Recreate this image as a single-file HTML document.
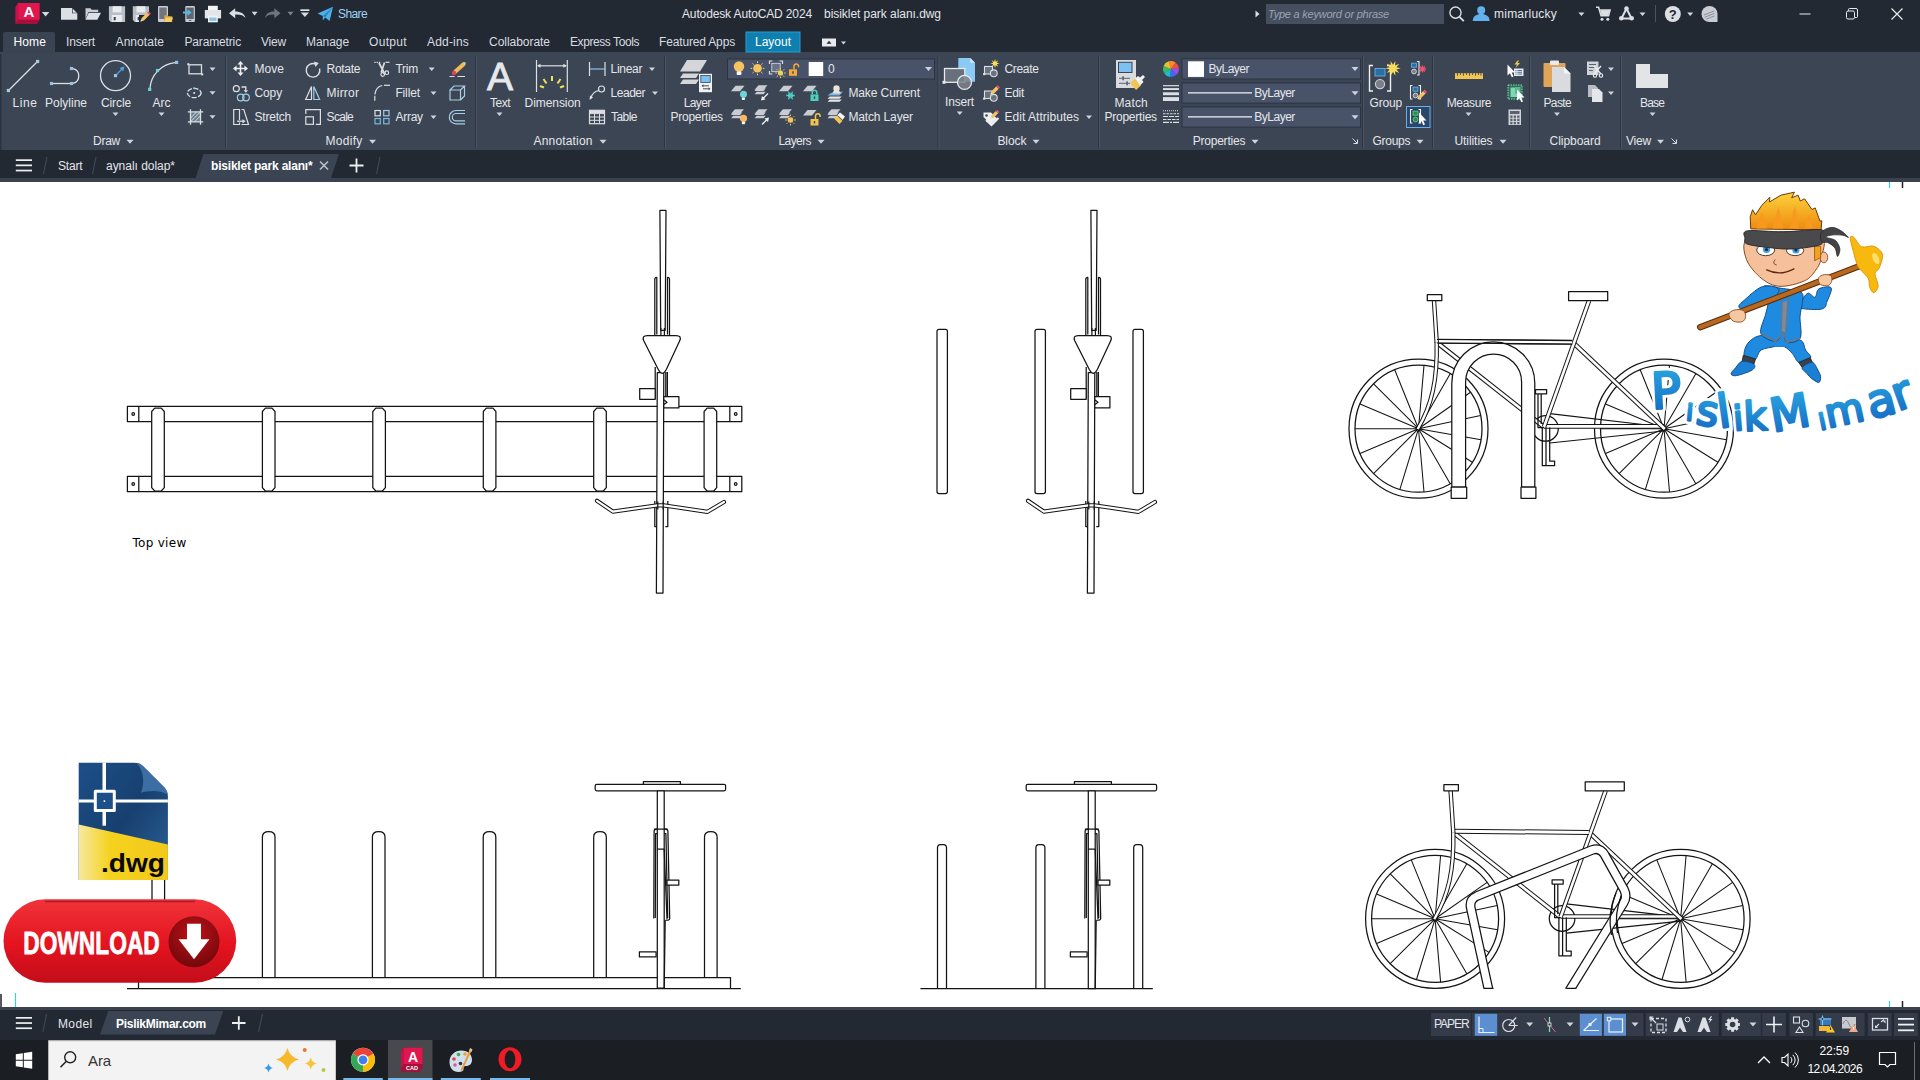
<!DOCTYPE html>
<html lang="tr"><head><meta charset="utf-8"><title>Autodesk AutoCAD 2024 - bisiklet park alanı.dwg</title>
<style>
html,body{margin:0;padding:0;width:1920px;height:1080px;overflow:hidden;background:#fff}
body{font-family:"Liberation Sans",sans-serif;font-size:12px;color:#e4e6ea;position:relative}
.r{position:absolute}
.t{position:absolute;white-space:nowrap;line-height:16px;height:16px;font-size:12px}
svg{position:absolute;left:0;top:0}
</style></head><body>

<div class="r" style="left:0;top:0;width:1920px;height:182px;background:#222933"></div>
<div class="r" style="left:0;top:52px;width:1920px;height:98px;background:#3c4553"></div>
<div class="r" style="left:0;top:178px;width:1920px;height:3.5px;background:#3a4250"></div>
<div class="r" style="left:0;top:1007px;width:1920px;height:33px;background:#222933"></div>
<div class="r" style="left:0;top:1007px;width:1920px;height:3px;background:#3a4250"></div>
<div class="r" style="left:0;top:1040px;width:1920px;height:40px;background:#1b1e23"></div>
<svg width="1920" height="1080" viewBox="0 0 1920 1080" style="font-family:'Liberation Sans',sans-serif">
<g id="titlebar">
<path d="M18 3h21.5v17l-2.5 4h-21.5v-17z" fill="#a50f3b"/>
<path d="M18.2 3h21.3v16.6h-21.3z" fill="#e2164f"/>
<path d="M15.5 7l2.7-4v16.6l-2.7 4z" fill="#c4134a"/>
<text x="28.8" y="16.6" font-size="15" font-weight="bold" fill="#fff" text-anchor="middle">A</text>
<path d="M41.9 11.9h7.5l-3.8 4.5z" fill="#d5d8de"/>
<path d="M61 8h11l5.3 5.2v6.6h-16.3z" fill="#dcdfe4"/><path d="M72 8v5.2h5.3z" fill="#222933"/><path d="M72.6 8.8l4 4h-4z" fill="#dcdfe4"/>
<path d="M85.5 8.2h5l1.2 1.6h6.5v2.2h-9.7l-3 7z" fill="#c9ccd2"/><path d="M88.7 12.8h12.3l-3.6 7h-12z" fill="#dcdfe4"/>
<path d="M108.9 6.2h16.2v15.7h-14.2l-2-2z" fill="#b9bdc6"/>
<rect x="112.6" y="6.2" width="8.8" height="6.2" fill="#e9ebee"/>
<rect x="111.8" y="15" width="10.4" height="6.9" fill="#e9ebee"/>
<rect x="113.7" y="17" width="2" height="3.3" fill="#3a4250"/>
<path d="M132.8 6.2h16.2v15.7h-14.2l-2-2z" fill="#b9bdc6"/>
<rect x="136.5" y="6.2" width="8.8" height="6.2" fill="#e9ebee"/>
<rect x="135.7" y="15" width="10.4" height="6.9" fill="#e9ebee"/>
<rect x="137.6" y="17" width="2" height="3.3" fill="#3a4250"/>
<rect x="139" y="15" width="11" height="8" fill="#222933"/>
<path d="M140.5 21.5l1.2-3.4 6.6-6.6 2.3 2.3-6.6 6.6z" fill="#f2c463"/><path d="M147 12.8l1.3-1.3 2.3 2.3-1.3 1.3z" fill="#e4526c"/><path d="M140.5 21.5l0.6-1.8 1.2 1.2z" fill="#eee"/>
<rect x="158" y="6" width="10" height="16" rx="1" fill="#c9ccd2"/><rect x="159.3" y="7.5" width="7.4" height="11.5" fill="#70757e"/>
<path d="M164.3 15.2h3.4l0.8 1h3.7v5.8h-7.9z" fill="#d9a441"/><path d="M165.6 17.6h7.4l-1.6 4.4h-7.1z" fill="#f6cd6a"/>
<rect x="185.3" y="6" width="9.6" height="16" rx="1" fill="#c9ccd2"/><rect x="186.5" y="7.6" width="7.2" height="11.4" fill="#5c6673"/><rect x="188.8" y="20" width="2.6" height="1" fill="#5c6673"/>
<path d="M183 11.4h4.6v-2.2l4 3.3-4 3.3v-2.2h-4.6z" fill="#5cb8e8"/>
<rect x="208" y="5.8" width="9.8" height="5" fill="#f2f3f5"/><path d="M204.8 10h16.3v8.4h-16.3z" fill="#e3e5e9"/><rect x="208" y="15.5" width="9.8" height="6.8" fill="#f2f3f5"/><rect x="209.3" y="17.5" width="7.2" height="3.4" fill="#8cc4ee"/>
<path d="M229 13.2l6.2-5v3.2c5.5 0 9.3 2 10.3 6.6-2-2.8-5.200-3.8-10.300-3.600v3.800z" fill="#dcdfe4"/>
<path d="M251.6 11.8h6.0l-3.0 3.6z" fill="#d5d8de"/>
<path d="M280.5 13.2l-6.200-5v3.2c-5.500 0-8.300 2-9.300 6.600 2-2.800 4.200-3.800 9.300-3.600v3.800z" fill="#6d7582"/>
<path d="M287.5 11.8h6.0l-3.0 3.6z" fill="#7b8390"/>
<rect x="300.4" y="9.300" width="9" height="1.700" fill="#dcdfe4"/>
<path d="M300.8 12.6h8.2l-4.1 4.4z" fill="#d5d8de"/>
<path d="M317.6 13.600l15.400-6.800-3.400 14.200-4.400-3.400-2.400 3v-4.600z" fill="#4fb0e8"/><path d="M322.800 16l10.200-9.200-7.800 10.800z" fill="#2c86c4"/>
<path d="M1255.500 10.500l4 3.500-4 3.500z" fill="#dcdfe4"/>
<rect x="1266" y="4" width="178" height="20" fill="#454f60"/>
<circle cx="1455.500" cy="12.600" r="5.600" fill="none" stroke="#dcdfe4" stroke-width="1.400"/><path d="M1459.500 16.800l4.300 4.400" stroke="#dcdfe4" stroke-width="1.800"/>
<circle cx="1481.200" cy="10.300" r="4" fill="#63b1ec"/><path d="M1472.800 21c0-5 3.800-7 8.400-7s8.400 2 8.400 7z" fill="#63b1ec"/>
<path d="M1578.4 12.4h6.0l-3.0 3.6z" fill="#d5d8de"/>
<path d="M1596 7.200h2.600l2.400 8.600h7.600l1.500-5.800h-10" fill="none" stroke="#dcdfe4" stroke-width="1.500"/><path d="M1600.200 10.200h9.400l-1.300 5h-6.800z" fill="#dcdfe4"/><circle cx="1602" cy="19.300" r="1.500" fill="#dcdfe4"/><circle cx="1607.800" cy="19.300" r="1.500" fill="#dcdfe4"/>
<path d="M1626.500 8.500l-5 10M1626.500 8.500l5 10M1621.500 18.500l10 0" stroke="#dcdfe4" stroke-width="2" fill="none"/><circle cx="1626.500" cy="8.600" r="2.300" fill="#dcdfe4"/><circle cx="1621.300" cy="18.300" r="2.300" fill="#dcdfe4"/><circle cx="1631.700" cy="18.300" r="2.300" fill="#dcdfe4"/>
<path d="M1639.5 12.4h6.0l-3.0 3.6z" fill="#d5d8de"/>
<rect x="1655" y="5" width="1" height="17" fill="#4a5363"/>
<circle cx="1672.800" cy="14" r="8" fill="#dcdfe4"/><text x="1672.800" y="18.600" font-size="13" font-weight="bold" fill="#222933" text-anchor="middle">?</text>
<path d="M1687.2 12.4h6.0l-3.0 3.6z" fill="#d5d8de"/>
<path d="M1701.500 14a8 8 0 1 1 16 0v8h-8a8 8 0 0 1-8-8z" fill="#c9ccd2"/><path d="M1704 15l10-4M1704.500 17.300l10-4M1706 19.300l8.500-3.400" stroke="#8a909b" stroke-width="1"/>
<rect x="1799.500" y="13.500" width="11" height="1" fill="#e8eaee"/>
<rect x="1846.500" y="11" width="8" height="8" rx="1.500" fill="none" stroke="#e8eaee" stroke-width="1"/><path d="M1848.500 11v-1.500a1 1 0 0 1 1-1h6.500a1.500 1.500 0 0 1 1.500 1.500v6.500a1 1 0 0 1-1 1h-1.500" fill="none" stroke="#e8eaee" stroke-width="1"/>
<path d="M1891.500 8.500l11 11M1902.500 8.500l-11 11" stroke="#e8eaee" stroke-width="1.200"/>
</g>
<g id="tabs">
<path d="M3 54v-20a2 2 0 0 1 2-2h48a2 2 0 0 1 2 2v20z" fill="#3a4351"/>
<rect x="746" y="32" width="54" height="20" fill="#0f7fb0" stroke="#2b9ed2" stroke-width="1"/>
<rect x="822" y="38.500" width="14" height="8" fill="#e8eaee"/>
<path d="M826.5 43.8h5.0l-2.5 -3.0z" fill="#222933"/>
<path d="M841.0 41.5h5.0l-2.5 3.0z" fill="#d5d8de"/>
</g><g id="ribbon">
<rect x="225.0" y="56" width="1" height="92" fill="#2e3644"/><rect x="226.0" y="56" width="1" height="92" fill="#485264"/>
<rect x="475.0" y="56" width="1" height="92" fill="#2e3644"/><rect x="476.0" y="56" width="1" height="92" fill="#485264"/>
<rect x="664.0" y="56" width="1" height="92" fill="#2e3644"/><rect x="665.0" y="56" width="1" height="92" fill="#485264"/>
<rect x="937.5" y="56" width="1" height="92" fill="#2e3644"/><rect x="938.5" y="56" width="1" height="92" fill="#485264"/>
<rect x="1098.0" y="56" width="1" height="92" fill="#2e3644"/><rect x="1099.0" y="56" width="1" height="92" fill="#485264"/>
<rect x="1362.0" y="56" width="1" height="92" fill="#2e3644"/><rect x="1363.0" y="56" width="1" height="92" fill="#485264"/>
<rect x="1432.0" y="56" width="1" height="92" fill="#2e3644"/><rect x="1433.0" y="56" width="1" height="92" fill="#485264"/>
<rect x="1529.0" y="56" width="1" height="92" fill="#2e3644"/><rect x="1530.0" y="56" width="1" height="92" fill="#485264"/>
<rect x="1620.0" y="56" width="1" height="92" fill="#2e3644"/><rect x="1621.0" y="56" width="1" height="92" fill="#485264"/>
<rect x="0" y="54" width="1.500" height="96" fill="#2b3240"/>
<path d="M9.5 89.5L36.5 62.5" fill="none" stroke="#dcdfe4" stroke-width="1.3" />
<rect x="6.8" y="88.9" width="3.2" height="3.2" fill="#a8cbe4"/>
<rect x="36.0" y="59.9" width="3.2" height="3.2" fill="#a8cbe4"/>
<path d="M53 83.500H70" fill="none" stroke="#dcdfe4" stroke-width="1.3" />
<path d="M73 68.700A7.500 7.500 0 0 1 73 83.300" fill="none" stroke="#dcdfe4" stroke-width="1.3" />
<rect x="49.9" y="81.9" width="3.2" height="3.2" fill="#8ec5ea"/>
<rect x="69.9" y="81.9" width="3.2" height="3.2" fill="#8ec5ea"/>
<rect x="69.9" y="66.9" width="3.2" height="3.2" fill="#8ec5ea"/>
<circle cx="115.500" cy="75.600" r="15" fill="none" stroke="#dcdfe4" stroke-width="1.300"/>
<path d="M116.500 74.500L123 68" fill="none" stroke="#4aa3e0" stroke-width="1.3" />
<path d="M124.500 66.500l-5 1.300 3.700 3.700z" fill="#4aa3e0"/>
<rect x="113.9" y="74.0" width="3.2" height="3.2" fill="#8ec5ea"/>
<path d="M150 88C151 75 161 64.500 175 62.700" fill="none" stroke="#dcdfe4" stroke-width="1.3" />
<rect x="148.1" y="87.8" width="3.2" height="3.2" fill="#6fcfd6"/>
<rect x="155.9" y="68.9" width="3.2" height="3.2" fill="#6fcfd6"/>
<rect x="175.0" y="60.8" width="3.2" height="3.2" fill="#8ec5ea"/>
<path d="M112.5 112.5h6.0l-3.0 3.5z" fill="#cfd3da"/>
<path d="M158.5 112.5h6.0l-3.0 3.5z" fill="#cfd3da"/>
<rect x="189" y="64.800" width="12.500" height="9" fill="none" stroke="#dcdfe4" stroke-width="1.300"/>
<rect x="187.3" y="63.2" width="2.0" height="2.0" fill="#dcdfe4"/>
<rect x="201.2" y="73.4" width="2.0" height="2.0" fill="#dcdfe4"/>
<ellipse cx="194.200" cy="93" rx="6.800" ry="4.600" fill="none" stroke="#dcdfe4" stroke-width="1.300" stroke-dasharray="5 1.500"/>
<rect x="193.3" y="92.1" width="1.8" height="1.8" fill="#dcdfe4"/>
<rect x="200.1" y="92.1" width="1.8" height="1.8" fill="#8ec5ea"/>
<rect x="193.3" y="87.4" width="1.8" height="1.8" fill="#8ec5ea"/>
<rect x="190.500" y="111.800" width="10" height="10" fill="#6f7f8c"/>
<path d="M190.500 118l6-6M190.500 121.800l10-10M194.500 121.800l6-6" fill="none" stroke="#d5eef0" stroke-width="0.9" />
<path d="M190.500 109.300v15.400M200.500 109.300v15.400M187.800 111.800h15.400M187.800 121.800h15.400" fill="none" stroke="#dcdfe4" stroke-width="1.3" />
<path d="M209.5 67.5h6.0l-3.0 3.5z" fill="#cfd3da"/>
<path d="M209.5 91.2h6.0l-3.0 3.5z" fill="#cfd3da"/>
<path d="M209.5 115.2h6.0l-3.0 3.5z" fill="#cfd3da"/>
<path d="M126.5 139.8h7.0l-3.5 4.0z" fill="#cfd3da"/>
<path d="M240.500 61l3 3.600h-2.200v3.100h3.100v-2.200l3.600 3-3.600 3v-2.200h-3.100v3.100h2.200l-3 3.600-3-3.600h2.200v-3.100h-3.100v2.200l-3.600-3 3.600-3v2.200h3.100v-3.100h-2.200z" fill="#eceef1"/>
<circle cx="236.300" cy="88.700" r="3" fill="none" stroke="#dcdfe4" stroke-width="1.200"/>
<path d="M241.500 87h4.300v3.500" fill="none" stroke="#dcdfe4" stroke-width="1.3" />
<path d="M243.500 90.200h4.600l-2.300 2.600z" fill="#dcdfe4"/>
<circle cx="240.700" cy="97.500" r="3.300" fill="none" stroke="#9fd0e4" stroke-width="1.200"/><circle cx="246" cy="97.500" r="3.300" fill="none" stroke="#9fd0e4" stroke-width="1.200"/>
<path d="M239.500 120v-10.500h-5.800v15h5.800v-2" fill="none" stroke="#dcdfe4" stroke-width="1.2" />
<path d="M241.500 109.500h2.300l4.700 15h-7" fill="none" stroke="#dcdfe4" stroke-width="1.2" />
<path d="M237 121.200h6" fill="none" stroke="#dcdfe4" stroke-width="1.3" />
<path d="M242.500 119l3 2.200-3 2.200z" fill="#dcdfe4"/>
<path d="M316 64.200A6.800 6.800 0 1 0 319.600 68.500" fill="none" stroke="#dcdfe4" stroke-width="1.4" />
<path d="M314 61.500l4.800 1.600-3.400 3.800z" fill="#dcdfe4"/>
<path d="M311.500 86.500v13h-5.800z" fill="none" stroke="#dcdfe4" stroke-width="1.2" />
<path d="M313.800 86.500v13h5.800z" fill="none" stroke="#9fd0e4" stroke-width="1.2" />
<path d="M305.800 114v-4.300h14.600v14.600h-4.600" fill="none" stroke="#dcdfe4" stroke-width="1.2" />
<rect x="305.800" y="116.800" width="7.600" height="7.500" fill="none" stroke="#dcdfe4" stroke-width="1.200"/>
<path d="M374.300 62.300h7" fill="none" stroke="#dcdfe4" stroke-width="1.2" stroke-dasharray="1.300 1"/>
<path d="M385.500 62.300h4" fill="none" stroke="#dcdfe4" stroke-width="1.2" />
<path d="M379 63l5.500 10.500M384.500 62.500l-3.300 10" fill="none" stroke="#dcdfe4" stroke-width="1.7" />
<circle cx="382.700" cy="74.500" r="1.800" fill="none" stroke="#dcdfe4" stroke-width="1.200"/><circle cx="386.800" cy="72.700" r="1.800" fill="none" stroke="#dcdfe4" stroke-width="1.200"/>
<path d="M374.800 100.800v-5" fill="none" stroke="#dcdfe4" stroke-width="1.2" />
<path d="M374.900 94.500C375.500 89.500 378.500 86.200 382.300 85.500" fill="none" stroke="#dcdfe4" stroke-width="1.2" />
<path d="M384 85.300h6" fill="none" stroke="#dcdfe4" stroke-width="1.2" />
<rect x="375.0" y="110.5" width="5.300" height="5.300" fill="none" stroke="#dcdfe4" stroke-width="1.200"/>
<rect x="383.7" y="110.5" width="5.300" height="5.300" fill="none" stroke="#9fcbe8" stroke-width="1.200"/>
<rect x="375.0" y="118.5" width="5.300" height="5.300" fill="none" stroke="#7ab8e0" stroke-width="1.200"/>
<rect x="383.7" y="118.5" width="5.300" height="5.300" fill="none" stroke="#7ab8e0" stroke-width="1.200"/>
<path d="M428.7 67.5h6.0l-3.0 3.5z" fill="#cfd3da"/>
<path d="M430.5 91.5h6.0l-3.0 3.5z" fill="#cfd3da"/>
<path d="M430.5 115.5h6.0l-3.0 3.5z" fill="#cfd3da"/>
<path d="M453.500 70.500l9-8 3 0.300-0.600 3-9 8z" fill="#f0b95a"/><path d="M462.500 62.500l3-0.300-0.300 3.300z" fill="#c8e0a0"/><circle cx="454" cy="73" r="2.200" fill="#e8414e"/>
<path d="M449.500 76.500h5M457.500 76.500h7.500" fill="none" stroke="#dcdfe4" stroke-width="1.1" />
<path d="M450 90h10.500v10h-10.500zM450 90l4-4h10.500l-4 4M464.500 86v10l-4 4" fill="none" stroke="#a9cfe6" stroke-width="1.2" />
<path d="M465 110.500h-9a6.700 6.700 0 0 0 0 13.400h9M465 113.500h-9a3.700 3.700 0 0 0 0 7.400h9" fill="none" stroke="#a9cfe6" stroke-width="1.2" />
<path d="M369.0 139.8h7.0l-3.5 4.0z" fill="#cfd3da"/>
<text x="500" y="90" font-size="39" fill="#e6e8ec" stroke="#e6e8ec" stroke-width="0.900" text-anchor="middle" style="font-family:'Liberation Sans',sans-serif">A</text>
<path d="M496.5 112.5h6.0l-3.0 3.5z" fill="#cfd3da"/>
<path d="M536.500 60v32M567.300 60v32" fill="none" stroke="#dcdfe4" stroke-width="1.2" />
<path d="M538 65.800h28" fill="none" stroke="#dcdfe4" stroke-width="1.2" />
<path d="M537 65.800l3.500-2v4zM566.800 65.800l-3.500-2v4z" fill="#dcdfe4"/>
<path d="M552.0 76.0L552.0 81.0" fill="none" stroke="#f0e060" stroke-width="2" />
<path d="M543.5 79.0L546.5 83.5" fill="none" stroke="#f0e060" stroke-width="2" />
<path d="M560.5 79.0L557.5 83.5" fill="none" stroke="#f0e060" stroke-width="2" />
<path d="M540.0 86.0L544.0 87.5" fill="none" stroke="#f0e060" stroke-width="2" />
<path d="M564.0 86.0L560.0 87.5" fill="none" stroke="#f0e060" stroke-width="2" />
<path d="M589.500 62v14M605 62v14" fill="none" stroke="#dcdfe4" stroke-width="1.2" />
<path d="M590 69h15" fill="none" stroke="#8ec5ea" stroke-width="1.2" />
<circle cx="601.500" cy="89" r="3" fill="none" stroke="#dcdfe4" stroke-width="1.200"/>
<path d="M599 90.500C594 91 592 94 590.500 98.500" fill="none" stroke="#dcdfe4" stroke-width="1.2" />
<path d="M589.500 100l0.500-4.500 3 2z" fill="#dcdfe4"/>
<rect x="589.500" y="110.300" width="15" height="13.400" fill="none" stroke="#dcdfe4" stroke-width="1.200"/>
<path d="M589.500 113.600h15M589.500 117h15M589.500 120.300h15M594.500 113.600v10M599.500 113.600v10" fill="none" stroke="#dcdfe4" stroke-width="1" />
<rect x="589.500" y="110.300" width="15" height="3" fill="#dcdfe4"/>
<path d="M649.0 67.5h6.0l-3.0 3.5z" fill="#cfd3da"/>
<path d="M652.0 91.5h6.0l-3.0 3.5z" fill="#cfd3da"/>
<path d="M599.5 139.8h7.0l-3.5 4.0z" fill="#cfd3da"/>
</g><g id="ribbon2">
<path d="M687.0 60.0h20.0l-7.0 11.5h-20.0z" fill="#d4d6da"/>
<path d="M683.0 73.5h16.0l-3.0 4.5h-16.0z" fill="#d4d6da"/>
<path d="M683.0 79.5h16.0l-3.0 4.5h-16.0z" fill="#d4d6da"/>
<rect x="699" y="73.800" width="13" height="18.400" fill="#f1f2f4"/><rect x="700.800" y="75.500" width="9.400" height="7" fill="#7cc0f4" stroke="#3b4453" stroke-width="0.800"/>
<path d="M702 85.800h7M703 88.800h7" fill="none" stroke="#4a5260" stroke-width="1" />
<path d="M701.500 85.800l2-1.500v3zM710.500 88.800l-2-1.500v3z" fill="#4a5260"/>
<rect x="727.500" y="59" width="207" height="20" fill="#48536a" stroke="#2c3442" stroke-width="1"/>
<circle cx="739.0" cy="66.5" r="5.2" fill="#f7c35f"/><rect x="736.7" y="71.2" width="4.7" height="3.9" rx="0.800" fill="#f4f4f4"/>
<circle cx="757.5" cy="68.3" r="4.3" fill="#f7c35f"/>
<path d="M762.8 68.3L764.4 68.3M761.2 72.0L762.4 73.2M757.5 73.6L757.5 75.2M753.8 72.0L752.6 73.2M752.2 68.3L750.6 68.3M753.8 64.6L752.6 63.4M757.5 63.0L757.5 61.4M761.2 64.6L762.4 63.4" fill="none" stroke="#f7d98a" stroke-width="1" />
<path d="M769.500 64v-3h3M779.500 61h3v3M769.500 71v3h3" fill="none" stroke="#dcdfe4" stroke-width="1.2" />
<rect x="771.800" y="63.300" width="8.400" height="8.400" fill="#6a7385" stroke="#dcdfe4" stroke-width="0.800"/>
<circle cx="780.5" cy="73.0" r="2.6" fill="#f0d060"/>
<path d="M784.1 73.0L785.7 73.0M783.0 75.5L784.2 76.7M780.5 76.6L780.5 78.2M778.0 75.5L776.8 76.7M776.9 73.0L775.3 73.0M778.0 70.5L776.8 69.3M780.5 69.4L780.5 67.8M783.0 70.5L784.2 69.3" fill="none" stroke="#f0d060" stroke-width="1" />
<rect x="789.0" y="69.3" width="8" height="6.500" fill="#f5a93a"/>
<path d="M794.0 69.3v-3a2.300 2.300 0 0 1 4.600 0v1" fill="none" stroke="#f5a93a" stroke-width="1.5" />
<rect x="792.3" y="71.3" width="1.400" height="2.400" fill="#3b4453"/>
<rect x="808.700" y="62" width="14.500" height="14" fill="#fff"/>
<path d="M925.0 67.0h7.0l-3.5 4.0z" fill="#cfd3da"/>
<path d="M735.5 85.8h9.0l-4.5 5.5h-9.0z" fill="#c9ccd3"/>
<circle cx="743.5" cy="94.3" r="3.5" fill="#6fd4d8"/><rect x="741.9" y="97.5" width="3.1" height="2.6" rx="0.800" fill="#f4f4f4"/>
<path d="M758.5 85.3h9.0l-4.0 4.5h-9.0z" fill="#c9ccd3"/>
<path d="M756.8 88.5h9.0l-2.3 2.6h-9.0z" fill="#c9ccd3"/>
<path d="M756.8 91.7h9.0l-2.3 2.6h-9.0z" fill="#c9ccd3"/>
<path d="M768 93.500l-5.500 5.500" fill="none" stroke="#eef0f2" stroke-width="1.3" />
<path d="M761 100.500l1-4.500 3.500 3.500z" fill="#eef0f2"/>
<path d="M783.5 85.8h9.0l-4.5 5.5h-9.0z" fill="#c9ccd3"/>
<path d="M794.8 95.5L786.2 95.5M792.6 99.2L788.4 91.8M788.4 99.2L792.6 91.8" fill="none" stroke="#4fcfc8" stroke-width="1.3" />
<circle cx="790.500" cy="95.500" r="2.300" fill="none" stroke="#4fcfc8" stroke-width="1"/>
<path d="M807.5 85.8h9.0l-4.5 5.5h-9.0z" fill="#c9ccd3"/>
<rect x="810.5" y="94.5" width="8" height="6.500" fill="#4fcfb8"/>
<path d="M812.2 94.5v-2a2.300 2.300 0 0 1 4.600 0v2" fill="none" stroke="#4fcfb8" stroke-width="1.5" />
<rect x="813.8" y="96.5" width="1.400" height="2.400" fill="#3b4453"/>
<path d="M831 93l12-1.500-3.500 4h-12z" fill="#7ab6e6"/>
<path d="M829.8 96.5h12.0l-2.3 2.3h-12.0z" fill="#e4e6ea"/>
<path d="M829.8 99.5h12.0l-2.3 2.3h-12.0z" fill="#e4e6ea"/>
<circle cx="836.500" cy="88.500" r="3.200" fill="#e8e4dc"/><path d="M832.500 93.500a4 3 0 0 1 8 0z" fill="#e8e4dc"/>
<path d="M735.0 109.3h9.0l-4.0 4.5h-9.0z" fill="#c9ccd3"/>
<path d="M733.3 112.5h9.0l-2.3 2.6h-9.0z" fill="#c9ccd3"/>
<path d="M733.3 115.7h9.0l-2.3 2.6h-9.0z" fill="#c9ccd3"/>
<circle cx="743.5" cy="118.3" r="3.6" fill="#f7b860"/><rect x="741.9" y="121.5" width="3.2" height="2.7" rx="0.800" fill="#f4f4f4"/>
<path d="M758.5 109.3h9.0l-4.0 4.5h-9.0z" fill="#c9ccd3"/>
<path d="M756.8 112.5h9.0l-2.3 2.6h-9.0z" fill="#c9ccd3"/>
<path d="M756.8 115.7h9.0l-2.3 2.6h-9.0z" fill="#c9ccd3"/>
<path d="M762 124.500l5.500-5.500" fill="none" stroke="#eef0f2" stroke-width="1.3" />
<path d="M769 117.500l-1 4.500-3.500-3.500z" fill="#eef0f2"/>
<path d="M783.0 109.3h9.0l-4.0 4.5h-9.0z" fill="#c9ccd3"/>
<path d="M781.3 112.5h9.0l-2.3 2.6h-9.0z" fill="#c9ccd3"/>
<path d="M781.3 115.7h9.0l-2.3 2.6h-9.0z" fill="#c9ccd3"/>
<circle cx="790.5" cy="120.0" r="2.8" fill="#f7c35f"/>
<path d="M794.3 120.0L795.9 120.0M793.2 122.7L794.3 123.8M790.5 123.8L790.5 125.4M787.8 122.7L786.7 123.8M786.7 120.0L785.1 120.0M787.8 117.3L786.7 116.2M790.5 116.2L790.5 114.6M793.2 117.3L794.3 116.2" fill="none" stroke="#f7c35f" stroke-width="1" />
<path d="M807.5 110.0h9.0l-4.5 5.5h-9.0z" fill="#c9ccd3"/>
<rect x="810.5" y="119.0" width="8" height="6.500" fill="#f2c14e"/>
<path d="M815.5 119.0v-3a2.300 2.300 0 0 1 4.600 0v1" fill="none" stroke="#f2c14e" stroke-width="1.5" />
<rect x="813.8" y="121.0" width="1.400" height="2.400" fill="#3b4453"/>
<path d="M831.5 109.3h9.0l-4.0 4.5h-9.0z" fill="#c9ccd3"/>
<path d="M829.8 112.5h9.0l-2.3 2.6h-9.0z" fill="#c9ccd3"/>
<path d="M829.8 115.7h9.0l-2.3 2.6h-9.0z" fill="#c9ccd3"/>
<path d="M834 118.500l3-3 5.500 5.500-3 3z" fill="#f2c452"/><path d="M837.500 115l2.500-2.500 5 4-2.500 3.500z" fill="#f4f4f4"/>
<path d="M817.5 139.8h7.0l-3.5 4.0z" fill="#cfd3da"/>
<path d="M958.300 58h12l4.700 4.700v19h-16.700z" fill="#8ccaf6"/><path d="M970.300 58v4.700h4.700z" fill="#cfe9fb"/>
<rect x="944.500" y="68.500" width="20.300" height="13.800" fill="#67707b" stroke="#e8eaee" stroke-width="1.300"/><rect x="942.500" y="80.800" width="3" height="3" fill="#e8eaee"/>
<circle cx="964.500" cy="82.400" r="7" fill="#7d828c" fill-opacity="0.850" stroke="#e8eaee" stroke-width="1.300"/>
<path d="M956.7 111.5h6.0l-3.0 3.5z" fill="#cfd3da"/>
<rect x="984.5" y="66.5" width="8" height="7.500" fill="#69727d" stroke="#dcdfe4" stroke-width="1.100"/><rect x="983.1" y="73.0" width="2.200" height="2.200" fill="#dcdfe4"/><circle cx="993.8" cy="73.3" r="3.400" fill="#69727d" stroke="#dcdfe4" stroke-width="1.100"/>
<path d="M999.6 63.5 996.8 64.3 998.3 66.8 995.8 65.3 995.0 68.1 994.2 65.3 991.7 66.8 993.2 64.3 990.4 63.5 993.2 62.7 991.7 60.2 994.2 61.7 995.0 58.9 995.8 61.7 998.3 60.2 996.8 62.7 z" fill="#f7dc5a"/>
<rect x="984.5" y="91.0" width="8" height="7.500" fill="#69727d" stroke="#dcdfe4" stroke-width="1.100"/><rect x="983.1" y="97.5" width="2.200" height="2.200" fill="#dcdfe4"/><circle cx="993.8" cy="97.8" r="3.400" fill="#69727d" stroke="#dcdfe4" stroke-width="1.100"/>
<g transform="translate(990.5 87.0) scale(0.95)"><path d="M0 8l1-3.500 5-5 2.500 2.500-5 5z" fill="#f2c463"/><path d="M6 -0.500l1.500-1.500 2.500 2.500-1.500 1.500z" fill="#e8506c"/><path d="M0 8l0.600-2 1.400 1.400z" fill="#eee"/></g>
<path d="M983.500 112.500h7.500l6 6-6 6-7.500-7.500z" fill="#eef0f2"/><circle cx="986.500" cy="115.500" r="1.300" fill="#3b4453"/><path d="M986 120l5.500 5 7-7" stroke="#eef0f2" stroke-width="2" fill="none"/>
<g transform="translate(990.5 111.5) scale(0.90)"><path d="M0 8l1-3.500 5-5 2.500 2.500-5 5z" fill="#f2c463"/><path d="M6 -0.500l1.500-1.500 2.500 2.500-1.500 1.500z" fill="#e8506c"/><path d="M0 8l0.600-2 1.400 1.400z" fill="#eee"/></g>
<path d="M1086.0 115.5h6.0l-3.0 3.5z" fill="#cfd3da"/>
<path d="M1032.5 139.8h7.0l-3.5 4.0z" fill="#cfd3da"/>
<rect x="1116" y="60" width="20" height="28" fill="#d9dbde"/><rect x="1118.500" y="62.300" width="13.500" height="10.200" fill="#7cc0f4" stroke="#3b4453" stroke-width="1"/>
<path d="M1119 78.300h11M1119 83.300h11" fill="none" stroke="#5a6270" stroke-width="1" />
<rect x="1122.300" y="76.300" width="1.600" height="4" fill="#5a6270"/><rect x="1126.300" y="81.300" width="1.600" height="4" fill="#5a6270"/>
<path d="M1130 83l5-4.500 6 7-5 4.500z" fill="#f2c452"/><path d="M1135 78.500l3-2.500 2 1.500 3-2.500 2 2-3 3 1.500 2-3.500 3.500z" fill="#f1f2f4"/>
<path d="M1171 69L1168.64 61.36A8 8 0 0 1 1175.50 62.39z" fill="#ff8a2a"/>
<path d="M1171 69L1175.50 62.39A8 8 0 0 1 1178.98 68.40z" fill="#f0503c"/>
<path d="M1171 69L1178.98 68.40A8 8 0 0 1 1176.45 74.86z" fill="#9a4cf0"/>
<path d="M1171 69L1176.45 74.86A8 8 0 0 1 1169.81 76.91z" fill="#3c6cf0"/>
<path d="M1171 69L1169.81 76.91A8 8 0 0 1 1164.08 73.01z" fill="#22b8c8"/>
<path d="M1171 69L1164.08 73.01A8 8 0 0 1 1163.55 66.08z" fill="#38c060"/>
<path d="M1171 69L1163.55 66.08A8 8 0 0 1 1168.64 61.36z" fill="#e8c030"/>
<rect x="1163" y="85.1" width="16" height="1.2" fill="#dcdfe4"/>
<rect x="1163" y="88.1" width="16" height="1.9" fill="#dcdfe4"/>
<rect x="1163" y="92.3" width="16" height="2.9" fill="#dcdfe4"/>
<rect x="1163" y="97.1" width="16" height="3.9" fill="#dcdfe4"/>
<path d="M1163 110.8h16" fill="none" stroke="#dcdfe4" stroke-width="1.1" stroke-dasharray="1 1"/>
<path d="M1163 113.7h16" fill="none" stroke="#dcdfe4" stroke-width="1.1" stroke-dasharray="2.500 1"/>
<path d="M1163 116.5h16" fill="none" stroke="#dcdfe4" stroke-width="1.1" stroke-dasharray="5 1"/>
<path d="M1163 119.5h16" fill="none" stroke="#dcdfe4" stroke-width="1.1" stroke-dasharray="3.500 1"/>
<path d="M1163 122.4h16" fill="none" stroke="#dcdfe4" stroke-width="1.1" stroke-dasharray="6 1 2 1"/>
<rect x="1182" y="58.8" width="178.500" height="20.200" fill="#48536a" stroke="#2c3442" stroke-width="1"/>
<path d="M1351.5 67.1h7.0l-3.5 4.0z" fill="#cfd3da"/>
<rect x="1182" y="82.9" width="178.500" height="20.200" fill="#48536a" stroke="#2c3442" stroke-width="1"/>
<path d="M1351.5 91.2h7.0l-3.5 4.0z" fill="#cfd3da"/>
<rect x="1182" y="106.9" width="178.500" height="20.200" fill="#48536a" stroke="#2c3442" stroke-width="1"/>
<path d="M1351.5 115.2h7.0l-3.5 4.0z" fill="#cfd3da"/>
<rect x="1188" y="61.300" width="16" height="15.600" fill="#fff"/>
<path d="M1188 92.800h64M1188 116.800h64" fill="none" stroke="#f0f2f4" stroke-width="1.2" />
<path d="M1251.5 139.8h7.0l-3.5 4.0z" fill="#cfd3da"/>
<path d="M1352.500 138.500l4.500 4.500M1357.500 139.500v4h-4" fill="none" stroke="#dcdfe4" stroke-width="1" />
<path d="M1373 65.500h-3.500v25.500h3.500M1387 65.500h3.500v25.500h-3.500" fill="none" stroke="#eef0f2" stroke-width="1.4" />
<rect x="1375" y="68.500" width="10" height="7.500" fill="#2e6da0" stroke="#5aa9e0" stroke-width="1"/><circle cx="1380" cy="84.100" r="4.600" fill="#7a7f88" stroke="#d0d3d8" stroke-width="1.100"/>
<path d="M1400.8 68.3 1396.4 69.4 1399.3 72.9 1395.1 71.2 1395.4 75.7 1393.0 71.9 1390.6 75.7 1390.9 71.2 1386.7 72.9 1389.6 69.4 1385.2 68.3 1389.6 67.2 1386.7 63.7 1390.9 65.4 1390.6 60.9 1393.0 64.7 1395.4 60.9 1395.1 65.4 1399.3 63.7 1396.4 67.2 z" fill="#f7dc5a"/>
<path d="M1417.0 61.5h2v13.500h-2" fill="none" stroke="#eef0f2" stroke-width="1.1" />
<rect x="1411.6" y="63.2" width="4.800" height="4" fill="#2e6da0" stroke="#5aa9e0" stroke-width="1"/><circle cx="1414.0" cy="71.5" r="2.400" fill="#7a7f88" stroke="#d0d3d8" stroke-width="1"/>
<path d="M1420 66.500l5 5M1425 66.500l-5 5M1422.500 65.500v7M1419 69h7" fill="none" stroke="#f0506a" stroke-width="1.3" />
<path d="M1412.5 85.5h-2v13.500h2" fill="none" stroke="#eef0f2" stroke-width="1.1" />
<path d="M1418.5 85.5h2v13.500h-2" fill="none" stroke="#eef0f2" stroke-width="1.1" />
<rect x="1413.1" y="87.2" width="4.800" height="4" fill="#2e6da0" stroke="#5aa9e0" stroke-width="1"/><circle cx="1415.5" cy="95.5" r="2.400" fill="#7a7f88" stroke="#d0d3d8" stroke-width="1"/>
<g transform="translate(1417.5 91.5) scale(0.95)"><path d="M0 8l1-3.500 5-5 2.500 2.500-5 5z" fill="#f2c463"/><path d="M6 -0.500l1.500-1.500 2.500 2.500-1.500 1.500z" fill="#e8506c"/><path d="M0 8l0.600-2 1.400 1.400z" fill="#eee"/></g>
<rect x="1406.500" y="106.500" width="23.500" height="21" fill="#2b4668" stroke="#6ab0e8" stroke-width="1"/>
<path d="M1412.5 109.5h-2v13.500h2" fill="none" stroke="#eef0f2" stroke-width="1.1" />
<path d="M1418.5 109.5h2v13.500h-2" fill="none" stroke="#eef0f2" stroke-width="1.1" />
<rect x="1413.1" y="111.2" width="4.800" height="4" fill="#2e8a50" stroke="#58c878" stroke-width="1"/><circle cx="1415.5" cy="119.5" r="2.400" fill="#2e8a50" stroke="#58c878" stroke-width="1"/>
<path d="M1419 112.500v11l2.500-2.300 1.800 4 1.700-0.800-1.800-3.800h3.300z" fill="#fff"/>
<path d="M1416.5 139.8h7.0l-3.5 4.0z" fill="#cfd3da"/>
<rect x="1455" y="73.200" width="28" height="5.800" fill="#f2c452"/>
<path d="M1457.500 73.200v2.500M1460.500 73.200v1.800M1463.500 73.200v2.500M1466.500 73.200v1.800M1469.500 73.200v2.500M1472.500 73.200v1.800M1475.500 73.200v2.500M1478.500 73.200v1.800M1481 73.200v2.500" fill="none" stroke="#3b4453" stroke-width="0.9" />
<path d="M1465.5 112.5h6.0l-3.0 3.5z" fill="#cfd3da"/>
<path d="M1507.500 64.500v11l2.500-2.300 1.800 4 1.700-0.800-1.800-3.800h3.300z" fill="#fff"/><rect x="1514" y="68.500" width="9.500" height="7.500" fill="#e8eaee"/><path d="M1517.500 60.500l-3 4h2.500l-1.500 3.500 4.500-5h-2.500l1.500-2.500z" fill="#f7c84a"/>
<path d="M1515.500 70.500h1M1517.500 70.500h4.500M1515.500 72.300h1M1517.500 72.300h4.500M1515.500 74.100h1M1517.500 74.100h4.500" fill="none" stroke="#3b6a90" stroke-width="0.9" />
<rect x="1508" y="85" width="14" height="14" fill="#2f6e58" stroke="#7fe0b0" stroke-width="1" stroke-dasharray="1.500 1"/><path d="M1510.500 87.500h5v6.500h5.500v3h-10.500z" fill="#7fd8b0"/><rect x="1515" y="87" width="5.500" height="7" fill="#58b890"/><path d="M1517 89.500v11l2.500-2.300 1.800 4 1.700-0.800-1.800-3.800h3.300z" fill="#fff"/>
<rect x="1508.500" y="109.500" width="12.500" height="15.500" fill="#d0d3d8"/><rect x="1510" y="111" width="9.500" height="3" fill="#5a6270"/>
<rect x="1510.2" y="115.5" width="2.300" height="2.300" fill="#5a6270"/>
<rect x="1513.7" y="115.5" width="2.300" height="2.300" fill="#5a6270"/>
<rect x="1517.2" y="115.5" width="2.300" height="2.300" fill="#5a6270"/>
<rect x="1510.2" y="118.7" width="2.300" height="2.300" fill="#5a6270"/>
<rect x="1513.7" y="118.7" width="2.300" height="2.300" fill="#5a6270"/>
<rect x="1517.2" y="118.7" width="2.300" height="2.300" fill="#5a6270"/>
<rect x="1510.2" y="121.9" width="2.300" height="2.300" fill="#5a6270"/>
<rect x="1513.7" y="121.9" width="2.300" height="2.300" fill="#5a6270"/>
<rect x="1517.2" y="121.9" width="2.300" height="2.300" fill="#5a6270"/>
<path d="M1499.5 139.8h7.0l-3.5 4.0z" fill="#cfd3da"/>
<rect x="1543.500" y="63" width="22" height="24" rx="1" fill="#e0a558"/><rect x="1550" y="60.500" width="9" height="4.500" rx="1" fill="#e8eaee"/><path d="M1552 67h12l6.500 6.500v18.500h-18.500z" fill="#d9dbde"/><path d="M1564 67v6.500h6.500z" fill="#f4f5f6"/>
<path d="M1554.0 112.5h6.0l-3.0 3.5z" fill="#cfd3da"/>
<rect x="1587" y="61.500" width="11.500" height="13.500" fill="#d0d3d8"/>
<path d="M1589 64.500h7M1589 67.500h7M1589 70.500h4" fill="none" stroke="#5a6270" stroke-width="1" />
<path d="M1594 66l7 8M1601 66l-7 8" fill="none" stroke="#eef0f2" stroke-width="1.3" />
<circle cx="1595" cy="75.500" r="1.700" fill="none" stroke="#eef0f2" stroke-width="1.100"/><circle cx="1601" cy="75.500" r="1.700" fill="none" stroke="#eef0f2" stroke-width="1.100"/>
<path d="M1588 85h7l3 3v9h-10z" fill="#b8bcc4"/><path d="M1592 89h7l3.500 3.500v9.500h-10.500z" fill="#e4e6ea"/>
<path d="M1608.0 67.5h6.0l-3.0 3.5z" fill="#cfd3da"/>
<path d="M1608.0 91.5h6.0l-3.0 3.5z" fill="#cfd3da"/>
<path d="M1636 64h14v10h18v14h-32z" fill="#e3e4e6"/>
<path d="M1649.5 112.5h6.0l-3.0 3.5z" fill="#cfd3da"/>
<path d="M1657.0 139.8h7.0l-3.5 4.0z" fill="#cfd3da"/>
<path d="M1671.500 138.500l4.500 4.500M1676.500 139.500v4h-4" fill="none" stroke="#dcdfe4" stroke-width="1" />
</g><g id="filetabs">
<rect x="15.800" y="159.3" width="16.200" height="1.700" fill="#eef0f2"/>
<rect x="15.800" y="164.5" width="16.200" height="1.700" fill="#eef0f2"/>
<rect x="15.800" y="169.7" width="16.200" height="1.700" fill="#eef0f2"/>
<path d="M47 157l-3.500 17M96 157l-3.500 17" fill="none" stroke="#3f4756" stroke-width="1.2" />
<path d="M195.500 178l8-24h135.500l-8 24z" fill="#3b4453"/>
<path d="M320 161.500l8 8M328 161.500l-8 8" fill="none" stroke="#b8bdc6" stroke-width="1.7" />
<path d="M349.500 165.500h14M356.500 158.500v14" fill="none" stroke="#eef0f2" stroke-width="1.8" />
<path d="M380 157l-3.500 17" fill="none" stroke="#3f4756" stroke-width="1.2" />
</g>
<g id="statusbar">
<rect x="15.800" y="1017.0" width="16.200" height="1.700" fill="#eef0f2"/>
<rect x="15.800" y="1022.2" width="16.200" height="1.700" fill="#eef0f2"/>
<rect x="15.800" y="1027.4" width="16.200" height="1.700" fill="#eef0f2"/>
<path d="M46.500 1014l-3.500 18" fill="none" stroke="#3f4756" stroke-width="1.2" />
<path d="M100 1034.500l8.300-23.500h115l-8.300 23.500z" fill="#3b4453"/>
<path d="M232 1023h13.500M238.800 1016.200v13.500" fill="none" stroke="#eef0f2" stroke-width="1.8" />
<path d="M262.500 1014l-4 18" fill="none" stroke="#3f4756" stroke-width="1.2" />
<rect x="1431.0" y="1013" width="212.5" height="23" fill="#343c4a"/>
<rect x="1645.8" y="1013" width="72.9" height="23" fill="#343c4a"/>
<rect x="1721.7" y="1013" width="64.1" height="23" fill="#343c4a"/>
<rect x="1789.5" y="1013" width="23.5" height="23" fill="#343c4a"/>
<rect x="1815.7" y="1013" width="48.9" height="23" fill="#343c4a"/>
<rect x="1867.8" y="1013" width="23.8" height="23" fill="#343c4a"/>
<rect x="1894.0" y="1013" width="23.8" height="23" fill="#343c4a"/>
<path d="M1471.500 1013v23M1761.500 1013v23" fill="none" stroke="#262d39" stroke-width="1.5" />
<rect x="1474.8" y="1013.800" width="22.4" height="22" fill="#5c8fd0"/>
<rect x="1579.8" y="1013.800" width="22.1" height="22" fill="#5c8fd0"/>
<rect x="1603.9" y="1013.800" width="22.1" height="22" fill="#5c8fd0"/>
<path d="M1479 1016.500v16h15.500" fill="none" stroke="#eef0f2" stroke-width="1.2" />
<path d="M1479 1028.500h4v4" fill="none" stroke="#eef0f2" stroke-width="1" />
<circle cx="1508.700" cy="1025.500" r="6" fill="none" stroke="#dcdfe4" stroke-width="1.200"/>
<path d="M1508.700 1025.500h9M1508.700 1025.500l7.500-8" fill="none" stroke="#dcdfe4" stroke-width="1.2" />
<path d="M1526.2 1022.5h7.0l-3.5 4.0z" fill="#cfd3da"/>
<path d="M1544 1018l11.500 14" fill="none" stroke="#d06a80" stroke-width="1" />
<path d="M1549.500 1017v15" fill="none" stroke="#7fe0c0" stroke-width="1.2" />
<rect x="1548" y="1023" width="3" height="3" fill="#343c4a" stroke="#eef0f2" stroke-width="0.800"/>
<path d="M1566.5 1022.5h7.0l-3.5 4.0z" fill="#cfd3da"/>
<path d="M1583.500 1030.500h15.500M1583.500 1030.500l13-12" fill="none" stroke="#eef0f2" stroke-width="1.2" />
<rect x="1588.500" y="1023" width="3" height="3" fill="#eef0f2"/>
<rect x="1609" y="1019" width="13.500" height="13" fill="none" stroke="#eef0f2" stroke-width="1.200"/><rect x="1607.300" y="1017.300" width="3.500" height="3.500" fill="#5c8fd0" stroke="#eef0f2" stroke-width="1"/>
<path d="M1631.5 1022.5h7.0l-3.5 4.0z" fill="#cfd3da"/>
<rect x="1651" y="1018.500" width="15" height="14" fill="none" stroke="#dcdfe4" stroke-width="1.300" stroke-dasharray="3 2"/><rect x="1657" y="1024" width="6" height="6" fill="none" stroke="#dcdfe4" stroke-width="1"/>
<path d="M1650 1017l6 6" fill="none" stroke="#dcdfe4" stroke-width="1.3" />
<path d="M1649.500 1016.500h4l-4 4z" fill="#dcdfe4"/>
<path d="M1678.5 1017.500l3 0 5 14.500-3.500 0-3-4.500-3 4.500-3.500 0z" fill="#dcdfe4"/>
<circle cx="1687.500" cy="1019.500" r="2.300" fill="none" stroke="#dcdfe4" stroke-width="1"/>
<path d="M1702.5 1017.500l3 0 5 14.500-3.500 0-3-4.500-3 4.500-3.500 0z" fill="#dcdfe4"/>
<path d="M1711 1016l-3 4h2l-1.500 3.500 4-4.500h-2l1.500-3z" fill="#dcdfe4"/>
<path d="M1736.60 1024.50L1739.90 1024.50M1735.43 1027.33L1737.76 1029.66M1732.60 1028.50L1732.60 1031.80M1729.77 1027.33L1727.44 1029.66M1728.60 1024.50L1725.30 1024.50M1729.77 1021.67L1727.44 1019.34M1732.60 1020.50L1732.60 1017.20M1735.43 1021.67L1737.76 1019.34" fill="none" stroke="#dcdfe4" stroke-width="3" />
<circle cx="1732.600" cy="1024.500" r="4.300" fill="none" stroke="#dcdfe4" stroke-width="3"/>
<path d="M1749.5 1022.5h7.0l-3.5 4.0z" fill="#cfd3da"/>
<path d="M1766 1024.500h16M1774 1016.500v16" fill="none" stroke="#eef0f2" stroke-width="1.6" />
<rect x="1793.500" y="1017" width="6" height="6" fill="none" stroke="#dcdfe4" stroke-width="1.100"/><circle cx="1805.500" cy="1023.500" r="3.300" fill="none" stroke="#dcdfe4" stroke-width="1.100"/><path d="M1799.500 1027l3.500 5.500h-7z" fill="none" stroke="#dcdfe4" stroke-width="1.100"/>
<rect x="1820" y="1018" width="11" height="7" fill="#3a78b8"/>
<path d="M1822.500 1015.500v10M1818.500 1019h13" fill="none" stroke="#7cc4f4" stroke-width="1.1" />
<circle cx="1822.500" cy="1019" r="1.500" fill="#343c4a" stroke="#7cc4f4" stroke-width="0.900"/><rect x="1819" y="1026" width="10" height="5" fill="#f2b83a"/><path d="M1830.500 1025l4.500 7.500h-9z" fill="#f7c81e"/><rect x="1830" y="1027.500" width="1" height="2.500" fill="#222"/>
<rect x="1842" y="1017" width="14" height="11.500" fill="#c8cace"/>
<path d="M1843 1024c2-5 4-5 6 0s4 5 6 0" fill="none" stroke="#7a7f88" stroke-width="1" />
<path d="M1853.500 1024l4.500 8h-9z" fill="#f0a882"/><rect x="1853" y="1027" width="1" height="2.500" fill="#fff"/>
<rect x="1872.500" y="1018.500" width="15" height="11.500" fill="none" stroke="#dcdfe4" stroke-width="1.300"/>
<path d="M1876 1027l3-3M1881 1022l3-2.500" fill="none" stroke="#dcdfe4" stroke-width="1.1" />
<path d="M1875 1028v-3l3 3zM1885.500 1020.500v3l-3-3z" fill="#dcdfe4"/>
<rect x="1898" y="1018.0" width="16" height="1.800" fill="#eef0f2"/>
<rect x="1898" y="1023.7" width="16" height="1.800" fill="#eef0f2"/>
<rect x="1898" y="1029.4" width="16" height="1.800" fill="#eef0f2"/>
</g>
<g id="taskbar">
<path d="M15.800 1054.200l7-1v6.500h-7zM23.800 1053l8.400-1.200v8h-8.400zM15.800 1060.700h7v6.500l-7-1zM23.800 1060.700h8.400v8l-8.400-1.200z" fill="#fff"/>
<rect x="48.300" y="1040.500" width="287.500" height="39.500" fill="#f3f3f3"/><rect x="48.300" y="1040.500" width="287.500" height="1" fill="#d8d8d8"/>
<circle cx="70.200" cy="1057.300" r="5.500" fill="none" stroke="#222" stroke-width="1.400"/><path d="M66.300 1061.300l-5.800 6" stroke="#222" stroke-width="1.500"/>
<path d="M287.5 1048.0Q289.8 1057.2 299.0 1059.5Q289.8 1061.8 287.5 1071.0Q285.2 1061.8 276.0 1059.5Q285.2 1057.2 287.5 1048.0z" fill="#f7b92c"/>
<path d="M310.8 1057.5Q312.0 1062.3 316.8 1063.5Q312.0 1064.7 310.8 1069.5Q309.6 1064.7 304.8 1063.5Q309.6 1062.3 310.8 1057.5z" fill="#f7c53c"/>
<path d="M268.5 1063.5Q269.4 1067.1 273.0 1068.0Q269.4 1068.9 268.5 1072.5Q267.6 1068.9 264.0 1068.0Q267.6 1067.1 268.5 1063.5z" fill="#3a9be8"/>
<circle cx="304.700" cy="1050" r="2" fill="#e8743a"/><circle cx="323.500" cy="1070" r="2" fill="#b8c84a"/>
<circle cx="363" cy="1059.800" r="12" fill="#e8e8e8"/>
<path d="M363.00 1059.80L352.61 1053.80A12.0 12.0 0 0 1 373.39 1053.80z" fill="#e94335"/>
<path d="M363.00 1059.80L373.39 1053.80A12.0 12.0 0 0 1 363.00 1071.80z" fill="#fbbc05"/>
<path d="M363.00 1059.80L363.00 1071.80A12.0 12.0 0 0 1 352.61 1053.80z" fill="#34a853"/>
<circle cx="363" cy="1059.800" r="5.600" fill="#fff"/><circle cx="363" cy="1059.800" r="4.400" fill="#3f7fe8"/>
<rect x="388" y="1040" width="44.500" height="40" fill="#48494c"/>
<path d="M403.500 1047.700h19v20l-2.500 4h-19v-20z" fill="#a50f3b"/><path d="M403.500 1047.700h19v16.300h-19z" fill="#e2164f"/><path d="M401 1051.700l2.500-4v16.300l-2.500 4z" fill="#c4134a"/>
<text x="413" y="1061.500" font-size="14" font-weight="bold" fill="#fff" text-anchor="middle">A</text><text x="412" y="1070.300" font-size="5.500" font-weight="bold" fill="#fff" text-anchor="middle">CAD</text>
<path d="M449.500 1062c0-7 5.500-11.500 12-11.500s10.500 4 10.500 9.500c0 4.500-3.500 6-6 6s-2.500 2-2.500 3.500-2 2.500-5 2.500c-5.500 0-9-4-9-10z" fill="#cfe0ee"/>
<circle cx="454.0" cy="1059.0" r="1.800" fill="#e0443a"/>
<circle cx="458.5" cy="1054.5" r="1.800" fill="#4aa84a"/>
<circle cx="465.0" cy="1054.0" r="1.800" fill="#f0a030"/>
<circle cx="455.0" cy="1065.0" r="1.800" fill="#e05a8a"/>
<circle cx="460.5" cy="1063.5" r="1.800" fill="#333"/>
<path d="M469.500 1050l2 1-9.500 20-1.500-0.800z" fill="#e89a3c"/><path d="M469 1051l1-3 2.500 1.200-1 2.800z" fill="#d8c8a0"/>
<ellipse cx="510" cy="1059.300" rx="11.500" ry="12" fill="#f01b24"/><ellipse cx="510" cy="1059.300" rx="5.300" ry="9" fill="#1b1e23"/>
<rect x="343.3" y="1078" width="39.5" height="2" fill="#76b9ed"/>
<rect x="388.0" y="1078" width="44.5" height="2" fill="#76b9ed"/>
<rect x="440.8" y="1078" width="40.0" height="2" fill="#76b9ed"/>
<rect x="490.0" y="1078" width="40.0" height="2" fill="#76b9ed"/>
<path d="M1758 1063l6-6 6 6" fill="none" stroke="#fff" stroke-width="1.3" />
<path d="M1782 1057.500h2.500l3.500-3.500v12l-3.500-3.500h-2.500z" fill="none" stroke="#fff" stroke-width="1.100"/>
<path d="M1790.500 1057a4 4 0 0 1 0 6M1792.800 1054.800a7 7 0 0 1 0 10.400M1795 1052.500a10 10 0 0 1 0 15" fill="none" stroke="#fff" stroke-width="1" />
<path d="M1879.500 1052.500h16v12h-5.500l-2.500 2.500-2.500-2.500h-5.500z" fill="none" stroke="#fff" stroke-width="1.200"/>
<rect x="1914" y="1042" width="1" height="38" fill="#6a6d72"/>
</g>
</svg>
<span class="t" id="l0" style="left:338.0px;top:5.5px;letter-spacing:-0.606px;color:#9fd2f3">Share</span>
<span class="t" id="l1" style="left:682.0px;top:5.5px;letter-spacing:-0.132px;">Autodesk AutoCAD 2024</span>
<span class="t" id="l2" style="left:824.0px;top:5.5px;letter-spacing:-0.046px;">bisiklet park alanı.dwg</span>
<span class="t" id="l3" style="left:1268.0px;top:5.5px;letter-spacing:-0.223px;font-style:italic;color:#9aa3b2;font-size:11px">Type a keyword or phrase</span>
<span class="t" id="l4" style="left:1494.0px;top:6.0px;letter-spacing:0.233px;">mimarlucky</span>
<span class="t" id="l5" style="left:13.5px;top:33.5px;letter-spacing:0.121px;color:#fff">Home</span>
<span class="t" id="l6" style="left:66.0px;top:33.5px;letter-spacing:-0.169px;color:#d9dce1">Insert</span>
<span class="t" id="l7" style="left:115.6px;top:33.5px;letter-spacing:0.044px;color:#d9dce1">Annotate</span>
<span class="t" id="l8" style="left:184.4px;top:33.5px;letter-spacing:-0.142px;color:#d9dce1">Parametric</span>
<span class="t" id="l9" style="left:261.0px;top:33.5px;letter-spacing:-0.199px;color:#d9dce1">View</span>
<span class="t" id="l10" style="left:306.0px;top:33.5px;letter-spacing:-0.062px;color:#d9dce1">Manage</span>
<span class="t" id="l11" style="left:369.0px;top:33.5px;letter-spacing:0.328px;color:#d9dce1">Output</span>
<span class="t" id="l12" style="left:427.0px;top:33.5px;letter-spacing:0.188px;color:#d9dce1">Add-ins</span>
<span class="t" id="l13" style="left:489.0px;top:33.5px;letter-spacing:-0.034px;color:#d9dce1">Collaborate</span>
<span class="t" id="l14" style="left:570.0px;top:33.5px;letter-spacing:-0.422px;color:#d9dce1">Express Tools</span>
<span class="t" id="l15" style="left:659.0px;top:33.5px;letter-spacing:-0.159px;color:#d9dce1">Featured Apps</span>
<span class="t" id="l16" style="left:755.0px;top:33.5px;letter-spacing:-0.005px;color:#fff">Layout</span>
<span class="t" id="l17" style="left:12.5px;top:94.5px;letter-spacing:0.578px;">Line</span>
<span class="t" id="l18" style="left:45.0px;top:94.5px;letter-spacing:-0.004px;">Polyline</span>
<span class="t" id="l19" style="left:101.0px;top:94.5px;letter-spacing:-0.112px;">Circle</span>
<span class="t" id="l20" style="left:152.5px;top:94.5px;letter-spacing:0.000px;">Arc</span>
<span class="t" id="l21" style="left:93.0px;top:133.0px;letter-spacing:-0.254px;">Draw</span>
<span class="t" id="l22" style="left:254.5px;top:60.8px;letter-spacing:0.039px;">Move</span>
<span class="t" id="l23" style="left:254.5px;top:84.5px;letter-spacing:-0.129px;">Copy</span>
<span class="t" id="l24" style="left:254.5px;top:108.5px;letter-spacing:-0.217px;">Stretch</span>
<span class="t" id="l25" style="left:326.6px;top:60.8px;letter-spacing:-0.310px;">Rotate</span>
<span class="t" id="l26" style="left:326.6px;top:84.5px;letter-spacing:0.195px;">Mirror</span>
<span class="t" id="l27" style="left:326.6px;top:108.5px;letter-spacing:-0.706px;">Scale</span>
<span class="t" id="l28" style="left:395.4px;top:60.8px;letter-spacing:-0.262px;">Trim</span>
<span class="t" id="l29" style="left:395.4px;top:84.5px;letter-spacing:-0.141px;">Fillet</span>
<span class="t" id="l30" style="left:395.4px;top:108.5px;letter-spacing:-0.234px;">Array</span>
<span class="t" id="l31" style="left:325.6px;top:133.0px;letter-spacing:0.276px;">Modify</span>
<span class="t" id="l32" style="left:490.0px;top:94.5px;letter-spacing:-0.504px;">Text</span>
<span class="t" id="l33" style="left:524.6px;top:94.5px;letter-spacing:-0.078px;">Dimension</span>
<span class="t" id="l34" style="left:610.6px;top:60.8px;letter-spacing:-0.310px;">Linear</span>
<span class="t" id="l35" style="left:610.6px;top:84.5px;letter-spacing:-0.479px;">Leader</span>
<span class="t" id="l36" style="left:611.0px;top:108.5px;letter-spacing:-0.537px;">Table</span>
<span class="t" id="l37" style="left:533.6px;top:133.0px;letter-spacing:0.161px;">Annotation</span>
<span class="t" id="l38" style="left:683.7px;top:94.8px;letter-spacing:-0.606px;">Layer</span>
<span class="t" id="l39" style="left:670.4px;top:109.2px;letter-spacing:-0.220px;">Properties</span>
<span class="t" id="l40" style="left:828.0px;top:61.0px;letter-spacing:-0.188px;">0</span>
<span class="t" id="l41" style="left:848.4px;top:84.5px;letter-spacing:-0.100px;">Make Current</span>
<span class="t" id="l42" style="left:848.4px;top:108.5px;letter-spacing:-0.139px;">Match Layer</span>
<span class="t" id="l43" style="left:778.5px;top:133.0px;letter-spacing:-0.589px;">Layers</span>
<span class="t" id="l44" style="left:945.0px;top:94.0px;letter-spacing:-0.169px;">Insert</span>
<span class="t" id="l45" style="left:1004.5px;top:60.8px;letter-spacing:-0.339px;">Create</span>
<span class="t" id="l46" style="left:1004.5px;top:84.5px;letter-spacing:-0.297px;">Edit</span>
<span class="t" id="l47" style="left:1004.5px;top:108.5px;letter-spacing:0.030px;">Edit Attributes</span>
<span class="t" id="l48" style="left:997.4px;top:133.0px;letter-spacing:-0.069px;">Block</span>
<span class="t" id="l49" style="left:1114.4px;top:94.8px;letter-spacing:0.163px;">Match</span>
<span class="t" id="l50" style="left:1104.4px;top:109.2px;letter-spacing:-0.220px;">Properties</span>
<span class="t" id="l51" style="left:1208.5px;top:60.8px;letter-spacing:-0.504px;">ByLayer</span>
<span class="t" id="l52" style="left:1254.3px;top:84.8px;letter-spacing:-0.504px;">ByLayer</span>
<span class="t" id="l53" style="left:1254.3px;top:108.8px;letter-spacing:-0.504px;">ByLayer</span>
<span class="t" id="l54" style="left:1192.7px;top:133.0px;letter-spacing:-0.220px;">Properties</span>
<span class="t" id="l55" style="left:1369.5px;top:94.5px;letter-spacing:-0.172px;">Group</span>
<span class="t" id="l56" style="left:1372.6px;top:133.0px;letter-spacing:-0.310px;">Groups</span>
<span class="t" id="l57" style="left:1446.7px;top:94.5px;letter-spacing:-0.312px;">Measure</span>
<span class="t" id="l58" style="left:1454.5px;top:133.0px;letter-spacing:-0.075px;">Utilities</span>
<span class="t" id="l59" style="left:1543.5px;top:94.5px;letter-spacing:-0.637px;">Paste</span>
<span class="t" id="l60" style="left:1549.6px;top:133.0px;letter-spacing:-0.042px;">Clipboard</span>
<span class="t" id="l61" style="left:1640.0px;top:94.5px;letter-spacing:-0.840px;">Base</span>
<span class="t" id="l62" style="left:1626.0px;top:133.0px;letter-spacing:-0.199px;">View</span>
<span class="t" id="l63" style="left:58.0px;top:157.7px;letter-spacing:-0.169px;">Start</span>
<span class="t" id="l64" style="left:106.0px;top:157.7px;letter-spacing:-0.030px;">aynalı dolap*</span>
<span class="t" id="l65" style="left:211.0px;top:157.7px;letter-spacing:-0.195px;font-weight:bold;color:#fff">bisiklet park alanı*</span>
<span class="t" id="l66" style="left:58.0px;top:1015.8px;letter-spacing:0.362px;">Model</span>
<span class="t" id="l67" style="left:116.0px;top:1015.8px;letter-spacing:-0.270px;font-weight:bold;color:#fff">PislikMimar.com</span>
<span class="t" id="l68" style="left:1434.0px;top:1016.0px;letter-spacing:-1.059px;font-size:12px">PAPER</span>
<span class="t" id="l69" style="left:88.0px;top:1052.5px;letter-spacing:-0.115px;font-size:15px;color:#333">Ara</span>
<span class="t" id="l70" style="left:1819.5px;top:1042.5px;letter-spacing:-0.106px;font-size:12px;color:#fff">22:59</span>
<span class="t" id="l71" style="left:1807.5px;top:1060.5px;letter-spacing:-0.556px;font-size:12px;color:#fff">12.04.2026</span>
<span class="t" id="l72" style="left:132.5px;top:534.5px;letter-spacing:0.287px;font-family:'DejaVu Sans',sans-serif;font-size:12px;color:#000">Top view</span>
<svg width="1920" height="1080" viewBox="0 0 1920 1080" fill="none" stroke="#141414" stroke-width="1.25" stroke-linejoin="round">
<defs>
<linearGradient id="gBlueTxt" x1="0" y1="0" x2="0" y2="1"><stop offset="0" stop-color="#2aa9e2"/><stop offset="1" stop-color="#1565c0"/></linearGradient>
<linearGradient id="gRed" x1="0" y1="0" x2="0" y2="1"><stop offset="0" stop-color="#f0333a"/><stop offset="0.55" stop-color="#e3131f"/><stop offset="1" stop-color="#c20e1a"/></linearGradient>
<radialGradient id="gDark" cx="0.5" cy="0.35" r="0.7"><stop offset="0" stop-color="#c01218"/><stop offset="1" stop-color="#6e070b"/></radialGradient>
<linearGradient id="gDwgB" x1="0" y1="0" x2="1" y2="1"><stop offset="0" stop-color="#1d4f88"/><stop offset="0.5" stop-color="#17406f"/><stop offset="1" stop-color="#2d6299"/></linearGradient>
<linearGradient id="gDwgY" x1="0" y1="0" x2="1" y2="0"><stop offset="0" stop-color="#f7e9a0"/><stop offset="0.35" stop-color="#f5d21e"/><stop offset="1" stop-color="#f3c81a"/></linearGradient>
<linearGradient id="gHair" x1="0" y1="0" x2="0" y2="1"><stop offset="0" stop-color="#fbd23a"/><stop offset="1" stop-color="#f08a10"/></linearGradient>
</defs>
<g id="rackTop">
<rect x="127.400" y="406.300" width="614.400" height="15.300" fill="#fff"/><rect x="127.400" y="476.300" width="614.400" height="15.400" fill="#fff"/>
<path d="M138.8 406.300v15.300M138.8 476.300v15.400"/>
<path d="M729.8 406.300v15.300M729.8 476.300v15.400"/>
<circle cx="133.2" cy="414.0" r="1.300" stroke-width="1.200"/>
<circle cx="133.2" cy="484.0" r="1.300" stroke-width="1.200"/>
<circle cx="735.7" cy="414.0" r="1.300" stroke-width="1.200"/>
<circle cx="735.7" cy="484.0" r="1.300" stroke-width="1.200"/>
<path d="M151.7 411.500l3-3.300h6.600l3 3.300v76.200l-3 3.300h-6.600l-3-3.300z" fill="#fff"/>
<path d="M262.4 411.500l3-3.300h6.600l3 3.300v76.200l-3 3.300h-6.600l-3-3.300z" fill="#fff"/>
<path d="M372.8 411.500l3-3.300h6.600l3 3.300v76.200l-3 3.300h-6.600l-3-3.300z" fill="#fff"/>
<path d="M483.3 411.500l3-3.300h6.600l3 3.300v76.200l-3 3.300h-6.600l-3-3.300z" fill="#fff"/>
<path d="M593.7 411.500l3-3.300h6.600l3 3.300v76.200l-3 3.300h-6.600l-3-3.300z" fill="#fff"/>
<path d="M704.1 411.500l3-3.300h6.600l3 3.300v76.200l-3 3.300h-6.600l-3-3.300z" fill="#fff"/>
</g>
<g id="postsPlan">
<rect x="937.0" y="329.300" width="10.400" height="164.200" rx="2" fill="#fff"/>
<rect x="1035.0" y="329.300" width="10.400" height="164.200" rx="2" fill="#fff"/>
<rect x="1133.0" y="329.300" width="10.400" height="164.200" rx="2" fill="#fff"/>
</g>
<g transform="translate(0.0 0)">
<path d="M655.200 367v32M654.800 501v25.500h2.500M667.800 501v25.500h-2.500"/>
<path d="M659.900 210.300h6.100l-0.800 120h-4.500z" fill="#fff"/>
<path d="M654.800 334.900v-55.500q0-2 2-2h0v57M669.500 334.900v-55.500q0-2-2-2h0v57"/>
<path d="M660.900 328v7M664.400 328v7"/>
<path d="M657.300 372.500h6.500l-0.800 220.500h-6.600z" fill="#fff"/>
<path d="M665.800 372v24.500M667.400 372v24.500"/>
<path d="M647.400 335.500h28.700q6 0 3.500 5.500l-13.300 28.500q-4 7.500-8 0l-14.400-28.500q-2.500-5.500 3.500-5.500z" fill="#fff"/>
<rect x="639.700" y="388.500" width="15.500" height="10.800" fill="#fff"/>
<rect x="663.800" y="396.700" width="15.100" height="11.200" fill="#fff"/>
<path d="M664 400l3 2.300-3 2.300"/>
<path d="M597 500.800L612.800 511.600L657.500 505.300h6L707.500 511.800L724 502" stroke="#141414" stroke-width="4.200" stroke-linecap="round"/>
<path d="M597 500.800L612.800 511.600L657.500 505.300h6L707.500 511.800L724 502" stroke="#fff" stroke-width="2.200" stroke-linecap="round"/>
<path d="M657.800 501.500v8M663.200 501.500v8"/>
</g>
<g transform="translate(431.0 0)">
<path d="M655.200 367v32M654.800 501v25.500h2.500M667.800 501v25.500h-2.500"/>
<path d="M659.900 210.300h6.100l-0.800 120h-4.500z" fill="#fff"/>
<path d="M654.800 334.900v-55.500q0-2 2-2h0v57M669.500 334.900v-55.500q0-2-2-2h0v57"/>
<path d="M660.900 328v7M664.400 328v7"/>
<path d="M657.300 372.500h6.500l-0.800 220.500h-6.600z" fill="#fff"/>
<path d="M665.800 372v24.500M667.400 372v24.500"/>
<path d="M647.400 335.500h28.700q6 0 3.500 5.500l-13.300 28.500q-4 7.500-8 0l-14.400-28.500q-2.500-5.500 3.500-5.500z" fill="#fff"/>
<rect x="639.700" y="388.500" width="15.500" height="10.800" fill="#fff"/>
<rect x="663.800" y="396.700" width="15.100" height="11.200" fill="#fff"/>
<path d="M664 400l3 2.300-3 2.300"/>
<path d="M597 500.800L612.800 511.600L657.500 505.300h6L707.500 511.800L724 502" stroke="#141414" stroke-width="4.200" stroke-linecap="round"/>
<path d="M597 500.800L612.800 511.600L657.500 505.300h6L707.500 511.800L724 502" stroke="#fff" stroke-width="2.200" stroke-linecap="round"/>
<path d="M657.800 501.500v8M663.200 501.500v8"/>
</g>
<g id="rackElev">
<path d="M152.0 977.500v-140.500q0-5.300 6.300-5.300t6.300 5.300v140.500" fill="#fff"/>
<path d="M262.4 977.500v-140.500q0-5.300 6.300-5.300t6.300 5.300v140.500" fill="#fff"/>
<path d="M372.4 977.500v-140.500q0-5.300 6.300-5.300t6.300 5.300v140.500" fill="#fff"/>
<path d="M483.2 977.500v-140.500q0-5.300 6.300-5.300t6.300 5.300v140.500" fill="#fff"/>
<path d="M593.7 977.500v-140.500q0-5.300 6.300-5.300t6.300 5.300v140.500" fill="#fff"/>
<path d="M704.5 977.500v-140.500q0-5.300 6.300-5.300t6.300 5.300v140.500" fill="#fff"/>
<path d="M138.500 988.700v-11.200h592v11.200"/>
<path d="M127 988.700h613.800"/>
</g>
<g id="postsElev">
<path d="M937.5 988.700v-141q0-3.200 3-3.200h3q3 0 3 3.200v141" fill="#fff"/>
<path d="M1035.9 988.700v-141q0-3.200 3-3.200h3q3 0 3 3.200v141" fill="#fff"/>
<path d="M1133.7 988.700v-141q0-3.200 3-3.200h3q3 0 3 3.200v141" fill="#fff"/>
<path d="M920.400 988.700h232.400"/>
</g>
<g transform="translate(0.0 0)">
<rect x="643.400" y="781.500" width="37" height="3" fill="#fff"/>
<rect x="595.200" y="784.300" width="130.400" height="6.500" rx="1.500" fill="#fff"/>
<path d="M653.800 918.600l0.300-87q0-2.600 2.600-2.600h8.600q2.600 0 2.600 2.600l1.800 87q0 1.500-1.500 1.500h-2.500" />
<path d="M655.300 918l0.300-84.500h10.300l1.800 84.500"/>
<path d="M657.300 790.800h6.900v197.2h-6.900z" fill="#fff"/>
<path d="M653.800 829h13.900M657.300 849h6.900"/>
<path d="M664.200 849l2.800 70M665.200 920l-1 68.0"/>
<rect x="667" y="880" width="11.800" height="5" fill="#fff"/>
<rect x="639.400" y="951.800" width="16.700" height="5.100" fill="#fff"/>
</g>
<g transform="translate(431.0 0)">
<rect x="643.400" y="781.500" width="37" height="3" fill="#fff"/>
<rect x="595.200" y="784.300" width="130.400" height="6.500" rx="1.500" fill="#fff"/>
<path d="M653.800 918.600l0.300-87q0-2.600 2.600-2.600h8.600q2.600 0 2.600 2.600l1.800 87q0 1.500-1.500 1.500h-2.500" />
<path d="M655.300 918l0.300-84.500h10.300l1.800 84.500"/>
<path d="M657.300 790.800h6.900v197.9h-6.900z" fill="#fff"/>
<path d="M653.800 829h13.900M657.300 849h6.900"/>
<path d="M664.200 849l2.800 70M665.200 920l-1 68.7"/>
<rect x="667" y="880" width="11.800" height="5" fill="#fff"/>
<rect x="639.400" y="951.800" width="16.700" height="5.100" fill="#fff"/>
</g>
<g transform="translate(0.0 0.0)">
<circle cx="1418.5" cy="428.7" r="69.500" fill="#fff"/><circle cx="1418.5" cy="428.7" r="63.500"/>
<path d="M1418.5 428.7L1355.0 428.7M1418.5 428.7L1360.0 403.9M1418.5 428.7L1373.6 383.8M1418.5 428.7L1394.7 369.8M1418.5 428.7L1424.0 365.4M1418.5 428.7L1450.2 373.7M1418.5 428.7L1470.5 392.3M1418.5 428.7L1480.6 415.5M1418.5 428.7L1481.0 439.7M1418.5 428.7L1472.4 462.3M1418.5 428.7L1450.2 483.7M1418.5 428.7L1424.0 492.0M1418.5 428.7L1399.9 489.4M1418.5 428.7L1373.6 473.6M1418.5 428.7L1360.0 453.5" stroke-width="1.050"/>
<circle cx="1664.0" cy="428.7" r="69.500" fill="#fff"/><circle cx="1664.0" cy="428.7" r="63.500"/>
<path d="M1664.0 428.7L1600.5 428.7M1664.0 428.7L1605.5 403.9M1664.0 428.7L1619.1 383.8M1664.0 428.7L1640.2 369.8M1664.0 428.7L1669.5 365.4M1664.0 428.7L1695.8 373.7M1664.0 428.7L1716.0 392.3M1664.0 428.7L1726.1 415.5M1664.0 428.7L1726.5 439.7M1664.0 428.7L1717.9 462.3M1664.0 428.7L1695.8 483.7M1664.0 428.7L1669.5 492.0M1664.0 428.7L1645.4 489.4M1664.0 428.7L1619.1 473.6M1664.0 428.7L1605.5 453.5" stroke-width="1.050"/>
<circle cx="1545.500" cy="428.400" r="12.800"/>
<path d="M1549.800 413.700L1664 427M1549.800 443L1664 431"/>
<path d="M1544.0 426.4L1664.0 426.4" stroke="#141414" stroke-width="4.6" stroke-linecap="butt"/>
<path d="M1544.0 426.4L1664.0 426.4" stroke="#fff" stroke-width="2.6" stroke-linecap="butt"/>
<path d="M1572.2 341.8L1664.8 429.0" stroke="#141414" stroke-width="4.8" stroke-linecap="butt"/>
<path d="M1572.2 341.8L1664.8 429.0" stroke="#fff" stroke-width="2.8" stroke-linecap="butt"/>
<path d="M1437.5 343.0L1544.0 427.0" stroke="#141414" stroke-width="4.8" stroke-linecap="butt"/>
<path d="M1437.5 343.0L1544.0 427.0" stroke="#fff" stroke-width="2.8" stroke-linecap="butt"/>
<path d="M1589.0 300.7L1544.0 427.0" stroke="#141414" stroke-width="4.6" stroke-linecap="butt"/>
<path d="M1589.0 300.7L1544.0 427.0" stroke="#fff" stroke-width="2.6" stroke-linecap="butt"/>
<path d="M1437.0 341.2L1572.2 342.3" stroke="#141414" stroke-width="5.0" stroke-linecap="butt"/>
<path d="M1437.0 341.2L1572.2 342.3" stroke="#fff" stroke-width="3.0" stroke-linecap="butt"/>
<path d="M1436.700 342C1437.500 380 1432 405 1417.700 429" stroke="#141414" stroke-width="4.400"/>
<path d="M1436.700 342C1437.500 380 1432 405 1417.700 429" stroke="#fff" stroke-width="2.400"/>
<path d="M1434.0 300.7L1436.7 342.5" stroke="#141414" stroke-width="4.4" stroke-linecap="butt"/>
<path d="M1434.0 300.7L1436.7 342.5" stroke="#fff" stroke-width="2.4" stroke-linecap="butt"/>
<rect x="1427.300" y="294.500" width="14.500" height="6.200" fill="#fff"/>
<rect x="1568.600" y="291.700" width="39.100" height="9" fill="#fff"/>
<rect x="1535.500" y="389.700" width="11.100" height="4.200" fill="#fff"/>
<path d="M1538 394v33.500h6M1541.200 394v30"/>
<path d="M1542.300 427.500v38.200h12.300v-4.700h-4.900v-33.500M1546 427.500v38"/>
</g>
<g id="rackU">
<path d="M1451.800 487v-103.700a41.500 41.500 0 0 1 83 0v103.700h-13.200v-105a28 28 0 0 0 -56 0v105z" fill="#fff"/>
<rect x="1451.200" y="487" width="15.500" height="11.300" fill="#fff"/><rect x="1521" y="487" width="14.900" height="11.300" fill="#fff"/>
</g>
<path d="M1437 339.500L1572.200 340.600M1437 343L1572.200 344"/>
<g transform="translate(16.6 490.1)">
<circle cx="1418.5" cy="428.7" r="69.500" fill="#fff"/><circle cx="1418.5" cy="428.7" r="63.500"/>
<path d="M1418.5 428.7L1355.0 428.7M1418.5 428.7L1360.0 403.9M1418.5 428.7L1373.6 383.8M1418.5 428.7L1394.7 369.8M1418.5 428.7L1424.0 365.4M1418.5 428.7L1450.2 373.7M1418.5 428.7L1470.5 392.3M1418.5 428.7L1480.6 415.5M1418.5 428.7L1481.0 439.7M1418.5 428.7L1472.4 462.3M1418.5 428.7L1450.2 483.7M1418.5 428.7L1424.0 492.0M1418.5 428.7L1399.9 489.4M1418.5 428.7L1373.6 473.6M1418.5 428.7L1360.0 453.5" stroke-width="1.050"/>
<circle cx="1664.0" cy="428.7" r="69.500" fill="#fff"/><circle cx="1664.0" cy="428.7" r="63.500"/>
<path d="M1664.0 428.7L1600.5 428.7M1664.0 428.7L1605.5 403.9M1664.0 428.7L1619.1 383.8M1664.0 428.7L1640.2 369.8M1664.0 428.7L1669.5 365.4M1664.0 428.7L1695.8 373.7M1664.0 428.7L1716.0 392.3M1664.0 428.7L1726.1 415.5M1664.0 428.7L1726.5 439.7M1664.0 428.7L1717.9 462.3M1664.0 428.7L1695.8 483.7M1664.0 428.7L1669.5 492.0M1664.0 428.7L1645.4 489.4M1664.0 428.7L1619.1 473.6M1664.0 428.7L1605.5 453.5" stroke-width="1.050"/>
<circle cx="1545.500" cy="428.400" r="12.800"/>
<path d="M1549.800 413.700L1664 427M1549.800 443L1664 431"/>
<path d="M1544.0 426.4L1664.0 426.4" stroke="#141414" stroke-width="4.6" stroke-linecap="butt"/>
<path d="M1544.0 426.4L1664.0 426.4" stroke="#fff" stroke-width="2.6" stroke-linecap="butt"/>
<path d="M1572.2 341.8L1664.8 429.0" stroke="#141414" stroke-width="4.8" stroke-linecap="butt"/>
<path d="M1572.2 341.8L1664.8 429.0" stroke="#fff" stroke-width="2.8" stroke-linecap="butt"/>
<path d="M1437.5 343.0L1544.0 427.0" stroke="#141414" stroke-width="4.8" stroke-linecap="butt"/>
<path d="M1437.5 343.0L1544.0 427.0" stroke="#fff" stroke-width="2.8" stroke-linecap="butt"/>
<path d="M1589.0 300.7L1544.0 427.0" stroke="#141414" stroke-width="4.6" stroke-linecap="butt"/>
<path d="M1589.0 300.7L1544.0 427.0" stroke="#fff" stroke-width="2.6" stroke-linecap="butt"/>
<path d="M1437.0 341.2L1572.2 342.3" stroke="#141414" stroke-width="5.0" stroke-linecap="butt"/>
<path d="M1437.0 341.2L1572.2 342.3" stroke="#fff" stroke-width="3.0" stroke-linecap="butt"/>
<path d="M1436.700 342C1437.500 380 1432 405 1417.700 429" stroke="#141414" stroke-width="4.400"/>
<path d="M1436.700 342C1437.500 380 1432 405 1417.700 429" stroke="#fff" stroke-width="2.400"/>
<path d="M1434.0 300.7L1436.7 342.5" stroke="#141414" stroke-width="4.4" stroke-linecap="butt"/>
<path d="M1434.0 300.7L1436.7 342.5" stroke="#fff" stroke-width="2.4" stroke-linecap="butt"/>
<rect x="1427.300" y="294.500" width="14.500" height="6.200" fill="#fff"/>
<rect x="1568.600" y="291.700" width="39.100" height="9" fill="#fff"/>
<rect x="1535.500" y="389.700" width="11.100" height="4.200" fill="#fff"/>
<path d="M1538 394v33.500h6M1541.200 394v30"/>
<path d="M1542.300 427.500v38.200h12.300v-4.700h-4.900v-33.500M1546 427.500v38"/>
</g>
<clipPath id="cpGround"><rect x="1440" y="830" width="220" height="158.600"/></clipPath>
<g clip-path="url(#cpGround)"><path d="M1490.400 998L1470.800 908Q1469 899.500 1477 896L1592 850Q1600 847 1604.500 854.500L1624 889.500Q1627.500 896.500 1623.500 903L1564.800 998" stroke="#141414" stroke-width="9.800" stroke-linecap="butt"/>
<path d="M1490.400 998L1470.800 908Q1469 899.500 1477 896L1592 850Q1600 847 1604.500 854.500L1624 889.500Q1627.500 896.500 1623.500 903L1564.800 998" stroke="#fff" stroke-width="7.300" stroke-linecap="butt"/></g>
<path d="M1483.600 988.400h9.800M1566.200 988.400h10.200"/>
<path d="M1616 893A69.500 69.500 0 0 0 1611.500 935" /><path d="M1621.500 896A63.500 63.500 0 0 0 1617.500 933"/><g id="mascot" stroke="none" stroke-linejoin="round">
<path d="M1761.1 335.6C1755.9 335.9 1750.6 339.8 1747.8 343.3C1745.0 346.9 1743.2 354.0 1744.4 356.7C1745.6 359.4 1752.2 360.6 1755.0 359.4C1757.8 358.3 1757.7 352.2 1761.1 350.0C1764.5 347.8 1772.6 347.6 1775.6 346.1C1778.5 344.6 1781.3 342.9 1778.9 341.1C1776.5 339.4 1766.3 335.2 1761.1 335.6z" fill="#1f8be0" stroke="#0d4d8e" stroke-width="1.0"/>
<path d="M1778.9 342.2C1783.0 341.2 1795.6 338.7 1800.0 340.0C1804.4 341.3 1803.8 347.0 1805.6 350.0C1807.3 353.0 1811.6 355.6 1810.6 357.8C1809.5 359.9 1802.5 363.5 1799.4 362.8C1796.4 362.0 1794.7 356.0 1792.2 353.3C1789.7 350.6 1787.2 347.9 1784.4 346.7C1781.7 345.5 1776.5 346.9 1775.6 346.1C1774.6 345.4 1774.8 343.2 1778.9 342.2z" fill="#1f8be0" stroke="#0d4d8e" stroke-width="1.0"/>
<path d="M1743.3 355.3 L1755.6 358.9 L1753.9 364.2 L1742.0 361.3z" fill="#3d3f44" stroke="#222" stroke-width="0.8"/>
<path d="M1798.7 362.4 L1810.2 357.6 L1812.4 362.4 L1802.2 367.6z" fill="#3d3f44" stroke="#222" stroke-width="0.8"/>
<path d="M1742.2 361.3C1745.3 360.7 1752.2 362.8 1753.9 364.2C1755.6 365.7 1755.1 368.1 1752.2 370.0C1749.4 371.9 1740.2 374.9 1736.7 375.6C1733.1 376.2 1731.3 375.2 1731.1 373.9C1730.9 372.6 1733.7 369.9 1735.6 367.8C1737.4 365.7 1739.2 361.9 1742.2 361.3z" fill="#1b80d4" stroke="#0d4d8e" stroke-width="1.0"/>
<path d="M1802.2 367.6C1803.2 365.7 1809.9 362.0 1812.4 362.4C1815.0 362.9 1816.4 367.6 1817.8 370.0C1819.1 372.4 1820.4 374.6 1820.6 376.7C1820.7 378.7 1820.3 382.1 1818.9 382.4C1817.5 382.8 1814.3 380.4 1812.2 378.9C1810.2 377.4 1808.3 375.2 1806.7 373.3C1805.0 371.4 1801.3 369.4 1802.2 367.6z" fill="#1b80d4" stroke="#0d4d8e" stroke-width="1.0"/>
<path d="M1763.3 332.2 L1799.4 336.7 L1798.9 346.7 L1776.7 346.7 L1762.2 342.2z" fill="#1f8be0"/>
<path d="M1800.0 303.3C1801.1 300.8 1805.3 294.4 1807.8 293.3C1810.3 292.3 1813.1 298.0 1815.0 297.2C1816.9 296.5 1816.2 290.5 1818.9 288.9C1821.6 287.3 1829.7 285.7 1831.1 287.8C1832.5 289.8 1828.7 297.6 1827.2 301.1C1825.7 304.6 1826.6 307.7 1822.2 308.9C1817.9 310.1 1804.8 309.3 1801.1 308.3C1797.4 307.4 1798.9 305.8 1800.0 303.3z" fill="#1f8be0" stroke="#0d4d8e" stroke-width="1.0"/>
<path d="M1763.3 286.7C1765.6 284.4 1774.8 287.4 1781.1 288.3C1787.4 289.3 1797.6 289.7 1801.1 292.2C1804.6 294.7 1802.4 299.3 1802.2 303.3C1802.0 307.4 1800.3 310.9 1800.0 316.7C1799.7 322.4 1802.4 333.7 1800.2 338.0C1798.0 342.3 1789.4 343.3 1786.7 342.4C1783.9 341.6 1785.4 333.0 1783.6 332.8C1781.7 332.6 1779.3 341.2 1775.6 341.3C1771.8 341.5 1762.6 338.0 1760.9 333.6C1759.2 329.1 1764.4 319.7 1765.6 314.4C1766.7 309.2 1768.1 306.9 1767.8 302.2C1767.4 297.6 1761.1 289.0 1763.3 286.7z" fill="#1f8be0" stroke="#0d4d8e" stroke-width="1.0"/>
<path d="M1782.0 302.2 L1788.0 301.1 L1785.8 332.8 L1781.1 330.6z" fill="#7d8a9c"/>
<path d="M1760.9 333.6 L1775.6 341.3 L1783.6 332.8 L1786.7 342.4 L1800.2 338.0" fill="none" stroke="#6f767f" stroke-width="1.600"/>
<path d="M1778.9 290.0 L1782.2 302.2 L1781.3 330.6" fill="none" stroke="#6f767f" stroke-width="1.300"/>
<path d="M1790.0 297.8 L1787.8 301.3 L1785.8 332.8" fill="none" stroke="#6f767f" stroke-width="1.300"/>
<path d="M1762.2 286.7C1768.1 284.7 1777.9 286.7 1778.9 289.4C1779.9 292.2 1773.9 300.1 1768.3 303.3C1762.8 306.6 1750.5 308.5 1745.6 309.1C1740.6 309.7 1739.3 308.2 1738.9 306.9C1738.5 305.6 1739.4 304.5 1743.3 301.1C1747.2 297.7 1756.3 288.6 1762.2 286.7z" fill="#1f8be0" stroke="#0d4d8e" stroke-width="1.0"/>
<path d="M1747.6 238.2C1741.4 242.8 1744.1 252.8 1746.5 259.5C1748.9 266.3 1756.3 274.2 1761.9 278.7C1767.5 283.1 1772.9 286.0 1780.0 286.3C1787.1 286.7 1798.6 283.5 1804.5 280.8C1810.5 278.1 1812.9 273.9 1815.7 270.2C1818.4 266.4 1820.0 264.1 1821.0 258.5C1822.0 252.8 1827.8 240.5 1821.5 236.1C1815.2 231.7 1795.6 231.5 1783.2 231.8C1770.9 232.2 1753.7 233.6 1747.6 238.2z" fill="#f5c09a" stroke="#8a4a20" stroke-width="1.0"/>
<ellipse cx="1823.9" cy="257.4" rx="3.800" ry="5.400" fill="#f5c09a" stroke="#8a4a20" stroke-width="0.900"/>
<path d="M1814.6 246.2 L1820.7 246.2 L1820.7 257.4 L1814.6 260.8z" fill="#f5a11e" stroke="#7a4a0a" stroke-width="0.7"/>
<ellipse cx="1765.7" cy="250.1" rx="9.0" ry="5.6" fill="#fff" stroke="#3a2a20" stroke-width="0.900"/><circle cx="1766.5" cy="249.5" r="3.600" fill="#4a9be0"/><circle cx="1766.5" cy="249.5" r="1.600" fill="#1a2a3a"/>
<ellipse cx="1795.1" cy="250.6" rx="8.6" ry="5.0" fill="#fff" stroke="#3a2a20" stroke-width="0.900"/><circle cx="1795.9" cy="250.0" r="3.600" fill="#4a9be0"/><circle cx="1795.9" cy="250.0" r="1.600" fill="#1a2a3a"/>
<path d="M1766.7 269.9Q1780.0 276.5 1793.9 268.9" fill="none" stroke="#5a2a10" stroke-width="1.300" stroke-linecap="round"/>
<path d="M1775.2 259.5q-3.500 4.500 1.500 5.500" fill="none" stroke="#8a4a20" stroke-width="1"/>
<path d="M1750.8 228.9 L1750.2 216.9 L1752.6 209.7 L1755.5 214.8 L1761.9 205.2 L1769.9 197.2 L1769.4 202.0 L1781.1 195.1 L1794.4 192.2 L1791.7 197.8 L1798.1 195.1 L1800.3 201.0 L1804.5 198.8 L1812.0 209.5 L1815.2 207.9 L1820.0 221.2 L1821.8 220.7 L1821.1 229.9z" fill="url(#gHair)" stroke="#6a3a08" stroke-width="1.0"/>
<path d="M1756.6 228.6 L1761.9 211.6 L1767.3 228.6z" fill="#f59a1c"/>
<path d="M1772.6 228.6 L1778.4 206.3 L1783.2 228.6z" fill="#f59a1c"/>
<path d="M1789.6 228.6 L1794.9 205.2 L1799.2 228.6z" fill="#f59a1c"/>
<path d="M1804.5 228.6 L1809.3 213.7 L1813.0 228.6z" fill="#f59a1c"/>
<path d="M1744.9 238.2C1744.9 236.0 1741.2 231.8 1747.6 230.8C1754.0 229.7 1771.0 232.0 1783.2 231.8C1795.5 231.7 1814.7 228.6 1821.1 229.7C1827.5 230.8 1822.0 235.7 1821.8 238.2C1821.6 240.7 1824.6 243.1 1820.0 244.8C1815.3 246.6 1801.8 248.3 1793.9 248.9C1786.0 249.4 1780.3 248.8 1772.6 248.0C1764.9 247.2 1752.2 245.8 1747.6 244.2C1743.0 242.6 1744.9 240.5 1744.9 238.2z" fill="#4a4a4d" stroke="#26262a" stroke-width="0.9"/>
<path d="M1821.3 232.4C1822.9 230.0 1827.9 227.7 1831.1 227.4C1834.4 227.1 1837.8 228.9 1840.7 230.6C1843.6 232.2 1848.0 236.6 1848.4 237.4C1848.7 238.2 1845.5 235.6 1842.8 235.2C1840.1 234.9 1835.0 234.7 1832.2 235.0C1829.4 235.4 1825.3 236.3 1825.8 237.2C1826.3 238.0 1833.0 238.4 1835.4 240.4C1837.7 242.3 1839.5 246.2 1839.9 248.9C1840.2 251.6 1838.3 256.7 1837.5 256.5C1836.7 256.4 1836.5 250.3 1834.9 248.0C1833.3 245.7 1830.2 243.8 1827.9 242.7C1825.7 241.6 1822.6 243.4 1821.5 241.6C1820.4 239.9 1819.7 234.7 1821.3 232.4z" fill="#444447" stroke="#222" stroke-width="0.7"/>
<path d="M1700.2 327.2L1860.4 265.7" stroke="#5a2d0c" stroke-width="6.400" stroke-linecap="round"/>
<path d="M1700.2 327.2L1860.4 265.7" stroke="#b8681f" stroke-width="4.200" stroke-linecap="round"/>
<path d="M1850.3 238.2C1850.3 235.4 1852.2 236.0 1854.0 237.4C1855.9 238.8 1858.2 245.3 1861.5 246.7C1864.7 248.2 1870.2 245.0 1873.7 246.2C1877.2 247.5 1881.5 250.6 1882.4 254.2C1883.4 257.8 1880.5 264.8 1879.2 268.0C1878.0 271.3 1875.2 270.6 1875.0 273.6C1874.8 276.6 1878.4 282.9 1878.2 286.1C1878.0 289.3 1875.1 292.6 1873.7 292.7C1872.3 292.9 1870.6 289.5 1869.7 287.2C1868.8 284.9 1869.6 281.3 1868.4 278.7C1867.1 276.1 1864.0 273.6 1862.2 271.4C1860.4 269.3 1859.1 268.8 1857.7 265.9C1856.4 263.0 1855.3 258.8 1854.0 254.2C1852.8 249.6 1850.3 241.0 1850.3 238.2z" fill="#f8b90f" stroke="#d89206" stroke-width="0.9"/>
<ellipse cx="1875.8" cy="258.5" rx="3" ry="6" fill="#fde06a" transform="rotate(-25 1875.8 258.5)"/>
<path d="M1728.9 314.4C1729.1 312.6 1732.0 310.6 1734.4 310.0C1736.9 309.4 1741.5 309.4 1743.3 310.6C1745.2 311.7 1745.7 314.8 1745.6 316.7C1745.4 318.5 1744.3 320.9 1742.2 321.7C1740.2 322.4 1735.6 322.3 1733.3 321.1C1731.1 319.9 1728.7 316.3 1728.9 314.4z" fill="#f6c8a0" stroke="#8a4a20" stroke-width="0.9"/>
<path d="M1818.4 278.7C1818.7 277.1 1820.6 275.5 1822.6 275.0C1824.7 274.4 1829.1 274.4 1830.6 275.5C1832.1 276.5 1832.1 279.7 1831.7 281.3C1831.2 283.0 1829.8 285.1 1827.9 285.6C1826.1 286.1 1822.1 285.7 1820.5 284.5C1818.9 283.4 1818.0 280.3 1818.4 278.7z" fill="#f6c8a0" stroke="#8a4a20" stroke-width="0.9"/>
</g>
<g id="pmtxt" stroke="none" style="font-family:'DejaVu Sans','Liberation Sans',sans-serif">
<text x="1652.0" y="409.0" font-size="50.0" transform="rotate(-3.0 1652.0 409.0)" fill="#fff" stroke="#fff" stroke-width="8" stroke-linejoin="round">P</text>
<text x="1686.0" y="420.0" font-size="22.0" transform="rotate(5.0 1686.0 420.0)" fill="#fff" stroke="#fff" stroke-width="8" stroke-linejoin="round">i</text>
<text x="1695.0" y="424.0" font-size="42.0" transform="rotate(8.0 1695.0 424.0)" fill="#fff" stroke="#fff" stroke-width="8" stroke-linejoin="round">s</text>
<text x="1719.5" y="428.0" font-size="46.0" transform="rotate(-8.0 1719.5 428.0)" fill="#fff" stroke="#fff" stroke-width="8" stroke-linejoin="round">l</text>
<text x="1734.5" y="430.5" font-size="34.0" transform="rotate(-5.0 1734.5 430.5)" fill="#fff" stroke="#fff" stroke-width="8" stroke-linejoin="round">i</text>
<text x="1744.5" y="431.0" font-size="40.0" transform="rotate(-3.0 1744.5 431.0)" fill="#fff" stroke="#fff" stroke-width="8" stroke-linejoin="round">k</text>
<text x="1773.0" y="432.0" font-size="46.0" transform="rotate(-10.0 1773.0 432.0)" fill="#fff" stroke="#fff" stroke-width="8" stroke-linejoin="round">M</text>
<text x="1821.0" y="430.0" font-size="22.0" transform="rotate(-12.0 1821.0 430.0)" fill="#fff" stroke="#fff" stroke-width="8" stroke-linejoin="round">i</text>
<text x="1828.0" y="428.0" font-size="40.0" transform="rotate(-12.0 1828.0 428.0)" fill="#fff" stroke="#fff" stroke-width="8" stroke-linejoin="round">m</text>
<text x="1871.0" y="419.0" font-size="46.0" transform="rotate(-14.0 1871.0 419.0)" fill="#fff" stroke="#fff" stroke-width="8" stroke-linejoin="round">a</text>
<text x="1898.0" y="411.0" font-size="46.0" transform="rotate(-20.0 1898.0 411.0)" fill="#fff" stroke="#fff" stroke-width="8" stroke-linejoin="round">r</text>
<text x="1652.0" y="409.0" font-size="50.0" transform="rotate(-3.0 1652.0 409.0)" fill="url(#gBlueTxt)" stroke="url(#gBlueTxt)" stroke-width="2.600" stroke-linejoin="round">P</text>
<text x="1686.0" y="420.0" font-size="22.0" transform="rotate(5.0 1686.0 420.0)" fill="url(#gBlueTxt)" stroke="url(#gBlueTxt)" stroke-width="2.600" stroke-linejoin="round">i</text>
<text x="1695.0" y="424.0" font-size="42.0" transform="rotate(8.0 1695.0 424.0)" fill="url(#gBlueTxt)" stroke="url(#gBlueTxt)" stroke-width="2.600" stroke-linejoin="round">s</text>
<text x="1719.5" y="428.0" font-size="46.0" transform="rotate(-8.0 1719.5 428.0)" fill="url(#gBlueTxt)" stroke="url(#gBlueTxt)" stroke-width="2.600" stroke-linejoin="round">l</text>
<text x="1734.5" y="430.5" font-size="34.0" transform="rotate(-5.0 1734.5 430.5)" fill="url(#gBlueTxt)" stroke="url(#gBlueTxt)" stroke-width="2.600" stroke-linejoin="round">i</text>
<text x="1744.5" y="431.0" font-size="40.0" transform="rotate(-3.0 1744.5 431.0)" fill="url(#gBlueTxt)" stroke="url(#gBlueTxt)" stroke-width="2.600" stroke-linejoin="round">k</text>
<text x="1773.0" y="432.0" font-size="46.0" transform="rotate(-10.0 1773.0 432.0)" fill="url(#gBlueTxt)" stroke="url(#gBlueTxt)" stroke-width="2.600" stroke-linejoin="round">M</text>
<text x="1821.0" y="430.0" font-size="22.0" transform="rotate(-12.0 1821.0 430.0)" fill="url(#gBlueTxt)" stroke="url(#gBlueTxt)" stroke-width="2.600" stroke-linejoin="round">i</text>
<text x="1828.0" y="428.0" font-size="40.0" transform="rotate(-12.0 1828.0 428.0)" fill="url(#gBlueTxt)" stroke="url(#gBlueTxt)" stroke-width="2.600" stroke-linejoin="round">m</text>
<text x="1871.0" y="419.0" font-size="46.0" transform="rotate(-14.0 1871.0 419.0)" fill="url(#gBlueTxt)" stroke="url(#gBlueTxt)" stroke-width="2.600" stroke-linejoin="round">a</text>
<text x="1898.0" y="411.0" font-size="46.0" transform="rotate(-20.0 1898.0 411.0)" fill="url(#gBlueTxt)" stroke="url(#gBlueTxt)" stroke-width="2.600" stroke-linejoin="round">r</text>
</g>
<g id="dwg" stroke="none">
<path d="M78.700 762.700h55q6 0 10 4l20 20q4.200 4.200 4.200 10v83.400h-89.200z" fill="url(#gDwgB)"/>
<path d="M78.700 824.600L167.900 844.500v35.600h-89.200z" fill="url(#gDwgY)"/>
<path d="M136.600 762.700q3 0 6 3l22 22q3.300 3.300 3.300 7c-8-5-20-4-27-2 4-10 3-22-4.300-30z" fill="#3c6ea3"/>
<rect x="102.500" y="762.700" width="3.500" height="63" fill="#fff"/><rect x="78.700" y="799.500" width="89.200" height="3" fill="#fff"/>
<rect x="95.300" y="791.300" width="19" height="19.200" fill="#1d4f88" stroke="#fff" stroke-width="3"/><rect x="103.600" y="800.300" width="1.600" height="1.600" fill="#fff"/>
<text x="101" y="871.600" font-size="26" font-weight="bold" fill="#0a0a0a" textLength="64" lengthAdjust="spacingAndGlyphs" style="font-family:'Liberation Sans',sans-serif">.dwg</text>
</g>
<g id="dl" stroke="none">
<rect x="3.500" y="899.300" width="232.700" height="83.400" rx="41.700" fill="url(#gRed)"/>
<path d="M45 901.500h150" stroke="#7a0a10" stroke-width="1.500" opacity="0.550"/>
<circle cx="194" cy="941.700" r="25.500" fill="url(#gDark)"/>
<path d="M187 923.800h14v15.500h8.500l-15.500 20-15.500-20h8.500z" fill="#fff"/>
<text x="23.200" y="953.800" font-size="31" font-weight="bold" fill="#fff" stroke="#fff" stroke-width="0.800" textLength="136.600" lengthAdjust="spacingAndGlyphs" style="font-family:'Liberation Sans',sans-serif">DOWNLOAD</text>
</g>
<path d="M15.500 993v14M1889.500 182v6M1889.500 1001v6" stroke="#38d0e0" stroke-width="1.200"/>
<path d="M1 994v13M1902.500 182v6M1902.500 1001v6" stroke="#222" stroke-width="1.500"/>
</svg>
</body></html>
